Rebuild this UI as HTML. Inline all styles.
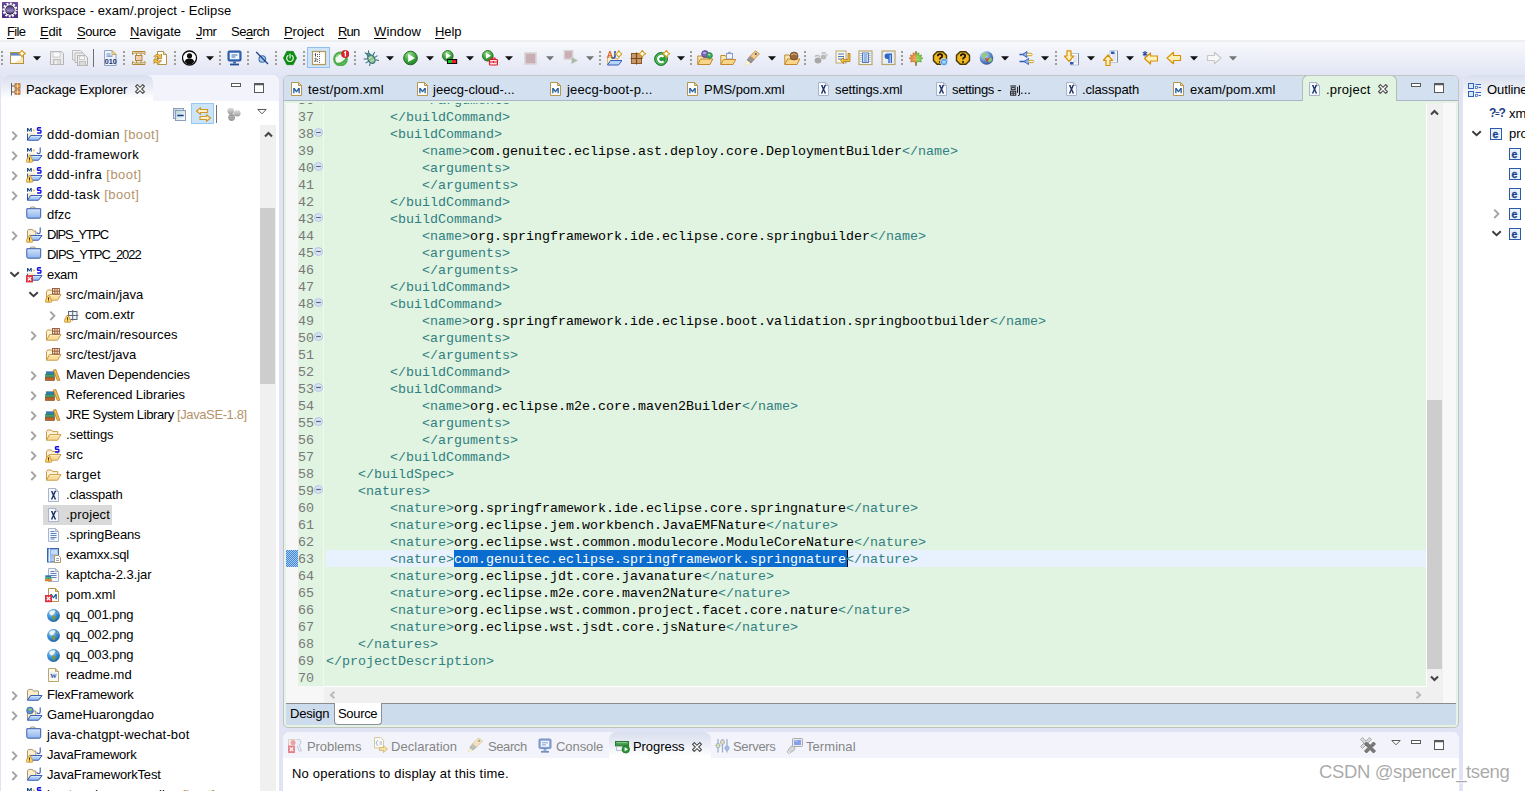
<!DOCTYPE html>
<html><head><meta charset="utf-8"><title>workspace - exam/.project - Eclipse</title>
<style>
html,body{margin:0;padding:0}
body{width:1525px;height:791px;position:relative;overflow:hidden;background:#dfe3f4;font-family:"Liberation Sans", sans-serif;font-size:13px;color:#000}
div,span,svg{position:absolute;box-sizing:border-box}
.t{white-space:pre;line-height:16px;height:16px}
.code{font-family:"Liberation Mono", monospace;font-size:13.333px;white-space:pre;line-height:17px;height:17px;color:#000}
.tg{color:#2f8080;position:static}
.ln{font-family:"Liberation Mono", monospace;font-size:13.333px;line-height:17px;height:17px;color:#787878;left:12px;width:16px}
.dec{color:#b3946a;position:static}
u{text-decoration:underline;text-underline-offset:2px}
</style></head>
<body>
<div style="left:0;top:0;width:1525px;height:22px;background:#fff"></div>
<svg style="left:2px;top:2px" width="16" height="16" viewBox="0 0 16 16" ><defs><linearGradient id="eb" x1="0" y1="0" x2="0" y2="1"><stop offset="0" stop-color="#6b4a9c"/><stop offset="1" stop-color="#4a2a7c"/></linearGradient><linearGradient id="es" x1="0" y1="0" x2="0" y2="1"><stop offset="0" stop-color="#4a3a78"/><stop offset=".5" stop-color="#8a7ab8"/><stop offset="1" stop-color="#3a2868"/></linearGradient></defs><rect x="0" y="0" width="16" height="16" rx=".6" fill="url(#eb)"/><circle cx="8" cy="8" r="6.500" fill="none" stroke="#fff" stroke-width="2" stroke-dasharray="1.900 1.503" stroke-dashoffset=".9"/><circle cx="8" cy="8" r="5.800" fill="#fff"/><circle cx="8" cy="8" r="4.700" fill="#15131f"/><circle cx="8" cy="8" r="3.900" fill="url(#es)"/><path d="M4.300 8.300h7.400M4.600 9.900h6.800" stroke="#b4a8d8" stroke-width=".7" opacity=".8"/></svg>
<div class="t" style="left:23px;top:3px;letter-spacing:0.089px">workspace - exam/.project - Eclipse</div>
<div style="left:0;top:22px;width:1525px;height:20px;background:#fff"></div>
<div style="left:0;top:40px;width:1525px;height:2px;background:#efefef"></div>
<div class="t" style="left:7px;top:24px;letter-spacing:-0.662px"><u>F</u>ile</div>
<div class="t" style="left:40px;top:24px;letter-spacing:-0.200px"><u>E</u>dit</div>
<div class="t" style="left:77px;top:24px;letter-spacing:-0.398px"><u>S</u>ource</div>
<div class="t" style="left:130px;top:24px;letter-spacing:-0.038px"><u>N</u>avigate</div>
<div class="t" style="left:196px;top:24px;letter-spacing:-0.386px"><u>J</u>mr</div>
<div class="t" style="left:231px;top:24px;letter-spacing:-0.498px">Se<u>a</u>rch</div>
<div class="t" style="left:284px;top:24px;letter-spacing:-0.065px"><u>P</u>roject</div>
<div class="t" style="left:338px;top:24px;letter-spacing:-0.816px"><u>R</u>un</div>
<div class="t" style="left:374px;top:24px;letter-spacing:0.127px"><u>W</u>indow</div>
<div class="t" style="left:435px;top:24px;letter-spacing:-0.084px"><u>H</u>elp</div>
<div style="left:0;top:42px;width:1525px;height:34px;background:linear-gradient(#f8f9fc,#eceef8 50%,#e1e5f4)"></div>
<div style="left:1px;top:51px;width:2px;height:14px;background-image:repeating-linear-gradient(#a29d90 0 2px,transparent 2px 4px)"></div>
<svg style="left:10px;top:50px" width="16" height="16" viewBox="0 0 16 16" ><rect x=".5" y="2.5" width="13" height="11" fill="#fff" stroke="#b39243"/><rect x="1" y="3" width="12" height="2.6" fill="#5d86c8"/><path d="M4 13l9-6v6Z" fill="#f6e7bd"/><path d="M12 0.10000000000000009Q12.9 2.6 15.4 3.5Q12.9 4.4 12 6.9Q11.1 4.4 8.6 3.5Q11.1 2.6 12 0.10000000000000009Z" fill="#fff6cc" stroke="#d69a1e" stroke-width="1.1"/><path d="M12 1.9v3.2M10.4 3.5h3.2" stroke="#fffef2" stroke-width="1.2"/></svg>
<svg style="left:33px;top:56px" width="8" height="5" viewBox="0 0 8 5" ><path d="M0 .3h8L4 4.5Z" fill="#111"/></svg>
<svg style="left:49px;top:50px" width="16" height="16" viewBox="0 0 16 16" ><path d="M1.5 1.5h11l2 2v11h-13Z" fill="#ececec" stroke="#b4b4b4"/><rect x="4" y="2" width="7" height="5" fill="#fafafa" stroke="#c2c2c2" stroke-width=".8"/><rect x="4.5" y="9.5" width="7" height="5" fill="#dcdcdc" stroke="#b9b9b9" stroke-width=".8"/><rect x="6" y="11" width="1.6" height="3" fill="#f4f4f4"/></svg>
<svg style="left:72px;top:50px" width="16" height="16" viewBox="0 0 16 16" ><path d="M.5 .5h8l1.5 1.5v8H.5Z" fill="#efefef" stroke="#bdbdbd"/><path d="M3 3h8l1.5 1.5v8H3Z" fill="#efefef" stroke="#b9b9b9"/><path d="M5.5 5.500h8l2 2v8h-10Z" fill="#ececec" stroke="#b0b0b0"/><rect x="7.500" y="6" width="5" height="3.500" fill="#fafafa" stroke="#c4c4c4" stroke-width=".8"/><rect x="7.500" y="11.5" width="6" height="4" fill="#dadada" stroke="#b9b9b9" stroke-width=".8"/></svg>
<div style="left:93px;top:49px;width:1px;height:18px;background:#6e6e6e"></div>
<svg style="left:103px;top:50px" width="16" height="16" viewBox="0 0 16 16" ><path d="M1.5 .5h7.500l4 4v11h-11.500Z" fill="#eef3fb" stroke="#8fa2c8"/><path d="M9 .5v4h4Z" fill="#f6e3b0" stroke="#c9a85a" stroke-linejoin="round"/><path d="M3.500 4h4M3.500 6.200h6" stroke="#6a8ed0" stroke-width="1.200"/><text x="1.800" y="14.200" font-family="Liberation Sans, sans-serif" font-weight="bold" font-size="7.600" fill="#14306e" textLength="12" lengthAdjust="spacingAndGlyphs">010</text></svg>
<div style="left:123px;top:51px;width:2px;height:14px;background-image:repeating-linear-gradient(#a29d90 0 2px,transparent 2px 4px)"></div>
<svg style="left:131px;top:50px" width="16" height="16" viewBox="0 0 16 16" ><path d="M1.500 1.500h12.500v3l-2-1.500H3.500l-2 1.500Z" fill="#fdf6e0" stroke="#b08a3a" stroke-width="1" stroke-linejoin="round"/><path d="M1.500 14.500h12.500v-3l-2 1.500H3.500l-2-1.500Z" fill="#fdf6e0" stroke="#b08a3a" stroke-width="1" stroke-linejoin="round"/><rect x="4.500" y="5.500" width="6.500" height="5" fill="#efd0b4" stroke="#b08a3a"/><path d="M5.500 3v2.500M10 3v2.500M5.500 10.500V13M10 10.500V13" stroke="#b08a3a" stroke-width=".9"/></svg>
<svg style="left:153px;top:50px" width="16" height="16" viewBox="0 0 16 16" ><path d="M4.500 1.500h6l3 3v10h-9Z" fill="#fff" stroke="#b39243"/><path d="M10.5 1.500v3h3" fill="#f6e7bd" stroke="#b39243"/><path d="M1 6.500q3-4 6-1l1.500-1.500v4.500H4l1.500-1.500q-2-1.500-3.500 .5Z" fill="#f6c443" stroke="#a9761a" stroke-width=".7"/><path d="M8.500 11q-3 4-6 1L1 13.500V9h4.500L4 10.500q2 1.500 3.500-.5Z" fill="#f6c443" stroke="#a9761a" stroke-width=".7"/></svg>
<div style="left:174px;top:51px;width:2px;height:14px;background-image:repeating-linear-gradient(#a29d90 0 2px,transparent 2px 4px)"></div>
<svg style="left:182px;top:50px" width="16" height="16" viewBox="0 0 16 16" ><circle cx="7.500" cy="8" r="7" fill="#fff" stroke="#0c0c0c" stroke-width="1.300"/><circle cx="7.500" cy="5.800" r="2.600" fill="#0c0c0c"/><path d="M2.600 11.800q.8-3.400 4.900-3.400t4.900 3.400q-2 2.700-4.900 2.700t-4.900-2.700Z" fill="#0c0c0c"/></svg>
<svg style="left:206px;top:56px" width="8" height="5" viewBox="0 0 8 5" ><path d="M0 .3h8L4 4.5Z" fill="#111"/></svg>
<div style="left:219px;top:51px;width:2px;height:14px;background-image:repeating-linear-gradient(#a29d90 0 2px,transparent 2px 4px)"></div>
<svg style="left:227px;top:50px" width="16" height="16" viewBox="0 0 16 16" ><rect x="1" y="1" width="13" height="10" rx="1.200" fill="#3d6dc0" stroke="#274e96"/><rect x="2.800" y="2.800" width="9.400" height="6.400" fill="#f4f8ff"/><path d="M4.500 5h6M4.500 7h4" stroke="#3d6dc0" stroke-width="1"/><path d="M6 11.500h3v2H6Z" fill="#3d6dc0"/><path d="M3 14.500h9" stroke="#274e96" stroke-width="1.800"/></svg>
<div style="left:247px;top:51px;width:2px;height:14px;background-image:repeating-linear-gradient(#a29d90 0 2px,transparent 2px 4px)"></div>
<svg style="left:254px;top:50px" width="16" height="16" viewBox="0 0 16 16" ><circle cx="8.300" cy="9" r="3.300" fill="#a9cbe8" stroke="#3a72b0" stroke-width="1.100"/><path d="M2.200 2 14 14" stroke="#1f3a8a" stroke-width="1.200"/></svg>
<div style="left:275px;top:51px;width:2px;height:14px;background-image:repeating-linear-gradient(#a29d90 0 2px,transparent 2px 4px)"></div>
<svg style="left:282px;top:50px" width="16" height="16" viewBox="0 0 16 16" ><path d="M4.800 1.300h6.400l3.400 6.700-3.400 6.700H4.800L1.400 8Z" fill="#0e8c12" stroke="#0a7a0e" stroke-width=".6"/><path d="M6 5.600a3.300 3.300 0 1 0 4 0" fill="none" stroke="#e8f8e8" stroke-width="1.200" stroke-linecap="round"/><path d="M8 4v4" stroke="#e8f8e8" stroke-width="1.200" stroke-linecap="round"/></svg>
<div style="left:303px;top:51px;width:2px;height:14px;background-image:repeating-linear-gradient(#a29d90 0 2px,transparent 2px 4px)"></div>
<div style="left:307px;top:47px;width:23px;height:21px;background:#cfe4f8;border:1px solid #90c0ec"></div>
<svg style="left:311px;top:50px" width="16" height="16" viewBox="0 0 16 16" ><rect x="1.500" y="1.500" width="13" height="13" fill="#fff" stroke="#b39a5a" stroke-width="1.200"/><path d="M8.500 2v12" stroke="#555" stroke-width=".9" stroke-dasharray="1 1"/><path d="M4.500 3.500v3M3.800 4.100l.7-.6" stroke="#333" stroke-width=".9" fill="none"/><path d="M3.600 8.600q1.300-1 1.500 .2t-1.600 2.300h2" stroke="#333" stroke-width=".9" fill="none"/><path d="M6.600 4.500v.01M6.600 6.500v.01M6.600 9.500v.01M6.600 11.300v.01" stroke="#333" stroke-width="1.100" stroke-linecap="round"/></svg>
<svg style="left:333px;top:50px" width="16" height="16" viewBox="0 0 16 16" ><circle cx="7.500" cy="9" r="6.300" fill="#f2fbf0" stroke="#4aae4a" stroke-width="2.200"/><path d="M2.500 12.500q6 1.500 10.500-5q.5 5-4 6.500t-6.500-1.500Z" fill="#4aae4a"/><path d="M3.500 7q2-3.500 6-3" stroke="#8fd48a" stroke-width="1.200" fill="none"/><circle cx="12.200" cy="4" r="3.800" fill="#e8202a" stroke="#b01018" stroke-width=".5"/><path d="M11.200 3l1.200-1v4.400" stroke="#fff" stroke-width="1.300" fill="none"/></svg>
<div style="left:354px;top:51px;width:2px;height:14px;background-image:repeating-linear-gradient(#a29d90 0 2px,transparent 2px 4px)"></div>
<svg style="left:363px;top:50px" width="16" height="16" viewBox="0 0 16 16" ><g transform="rotate(-32 8 8.500)"><ellipse cx="8" cy="9.200" rx="3.300" ry="4.600" fill="#8fbf8f" stroke="#2a6a78" stroke-width="1.100"/><circle cx="8" cy="3.800" r="1.700" fill="#5a9a9a" stroke="#2a6a78" stroke-width=".8"/><path d="M4.800 7 1.500 5M4.700 9.500H1M4.800 12 2 14.800M11.200 7l3.300-2M11.300 9.500H15M11.200 12l2.800 2.800M7 2.200 5.800 .3M9 2.200 10.200 .3" stroke="#2a6a78" stroke-width="1"/><path d="M6.300 8q1.700-1.500 3.400 0M6 10.500q2 1.500 4 0" stroke="#d4ecd0" stroke-width=".9" fill="none"/></g></svg>
<svg style="left:386px;top:56px" width="8" height="5" viewBox="0 0 8 5" ><path d="M0 .3h8L4 4.5Z" fill="#111"/></svg>
<svg style="left:403px;top:50px" width="16" height="16" viewBox="0 0 16 16" ><defs><radialGradient id="rg" cx=".4" cy=".25" r=".9"><stop offset="0" stop-color="#9be08f"/><stop offset=".55" stop-color="#3ba03a"/><stop offset="1" stop-color="#1c6e22"/></radialGradient></defs><circle cx="7.5" cy="8" r="6.8" fill="url(#rg)" stroke="#1f6a24" stroke-width="1"/><path d="M5.200 4 12 8 5.200 12Z" fill="#fff"/></svg>
<svg style="left:426px;top:56px" width="8" height="5" viewBox="0 0 8 5" ><path d="M0 .3h8L4 4.5Z" fill="#111"/></svg>
<svg style="left:442px;top:50px" width="16" height="16" viewBox="0 0 16 16" ><defs><radialGradient id="rg" cx=".4" cy=".25" r=".9"><stop offset="0" stop-color="#9be08f"/><stop offset=".55" stop-color="#3ba03a"/><stop offset="1" stop-color="#1c6e22"/></radialGradient></defs><circle cx="5.800" cy="5.800" r="5.300" fill="url(#rg)" stroke="#1f6a24" stroke-width=".9"/><path d="M4 2.800 9 5.800 4 8.800Z" fill="#fff"/><rect x="5" y="9" width="10.200" height="5" fill="#0a0a0a"/><rect x="6" y="10" width="4" height="3" fill="#14c030"/><rect x="10" y="10" width="4.200" height="3" fill="#e8202a"/></svg>
<svg style="left:466px;top:56px" width="8" height="5" viewBox="0 0 8 5" ><path d="M0 .3h8L4 4.5Z" fill="#111"/></svg>
<svg style="left:482px;top:50px" width="16" height="16" viewBox="0 0 16 16" ><defs><radialGradient id="rg" cx=".4" cy=".25" r=".9"><stop offset="0" stop-color="#9be08f"/><stop offset=".55" stop-color="#3ba03a"/><stop offset="1" stop-color="#1c6e22"/></radialGradient></defs><circle cx="5.800" cy="5.800" r="5.300" fill="url(#rg)" stroke="#1f6a24" stroke-width=".9"/><path d="M4 2.800 9 5.800 4 8.800Z" fill="#fff"/><rect x="7.500" y="9.500" width="8" height="5.500" rx=".8" fill="#fbe4e4" stroke="#d8202a" stroke-width="1.200"/><path d="M10 9.500V8h3v1.500" stroke="#d8202a" fill="none" stroke-width="1.200"/><path d="M7.500 12h8M11.500 11v2" stroke="#d8202a" stroke-width="1.200"/></svg>
<svg style="left:505px;top:56px" width="8" height="5" viewBox="0 0 8 5" ><path d="M0 .3h8L4 4.5Z" fill="#111"/></svg>
<svg style="left:523px;top:50px" width="16" height="16" viewBox="0 0 16 16" ><rect x="2" y="3" width="11" height="11" fill="#c9afb5" stroke="#dad3d4" stroke-width="1.600"/></svg>
<svg style="left:546px;top:56px" width="8" height="5" viewBox="0 0 8 5" ><path d="M0 .3h8L4 4.5Z" fill="#747474"/></svg>
<svg style="left:563px;top:50px" width="16" height="16" viewBox="0 0 16 16" ><rect x="1.200" y=".5" width="8.600" height="8.600" fill="#c9afb5" stroke="#dad3d4" stroke-width="1.400"/><path d="M8.500 7 14.800 10.500 8.500 14Z" fill="#aab8aa" stroke="#cfd8cf" stroke-width=".8"/></svg>
<svg style="left:586px;top:56px" width="8" height="5" viewBox="0 0 8 5" ><path d="M0 .3h8L4 4.5Z" fill="#747474"/></svg>
<div style="left:599px;top:51px;width:2px;height:14px;background-image:repeating-linear-gradient(#a29d90 0 2px,transparent 2px 4px)"></div>
<svg style="left:606px;top:50px" width="16" height="16" viewBox="0 0 16 16" ><path d="M1.500 14.500V8.500l1-1.500h3l1 1.500h5v1.500" fill="#fbeec8" stroke="#c9a85a" stroke-width=".8"/><path d="M1.500 15 4.500 10.500h11.500l-3.500 4.500Z" fill="#b4d4f8" stroke="#3a5ab8"/><path d="M.8 8 3.300 1h1.200L7 8H5.500L5 6.300H2.800L2.300 8ZM3.100 5.200h1.600L3.900 2.600Z" fill="#e0601a"/><path d="M9 1v5q0 2-1.800 2-1 0-1.500-.6" fill="none" stroke="#1f5aa8" stroke-width="1.600"/><path d="M12.8 0.6000000000000001Q13.700000000000001 3.1 16.2 4Q13.700000000000001 4.9 12.8 7.4Q11.9 4.9 9.4 4Q11.9 3.1 12.8 0.6000000000000001Z" fill="#fff6cc" stroke="#d69a1e" stroke-width="1.1"/><path d="M12.8 2.4v3.2M11.200000000000001 4h3.2" stroke="#fffef2" stroke-width="1.2"/></svg>
<svg style="left:630px;top:50px" width="16" height="16" viewBox="0 0 16 16" ><rect x="1.500" y="3.500" width="10" height="10" fill="#c79a68" stroke="#8a5a2c"/><path d="M6.500 2.500v12M.5 8.500h12" stroke="#7a4a1e" stroke-width="1.200"/><path d="M12.3 0.30000000000000027Q13.200000000000001 2.8000000000000003 15.700000000000001 3.7Q13.200000000000001 4.6000000000000005 12.3 7.1Q11.4 4.6000000000000005 8.9 3.7Q11.4 2.8000000000000003 12.3 0.30000000000000027Z" fill="#fff6cc" stroke="#d69a1e" stroke-width="1.1"/><path d="M12.3 2.1v3.2M10.700000000000001 3.7h3.2" stroke="#fffef2" stroke-width="1.2"/></svg>
<svg style="left:654px;top:50px" width="16" height="16" viewBox="0 0 16 16" ><circle cx="7" cy="9" r="6.400" fill="#2a9a3a" stroke="#157024" stroke-width="1"/><circle cx="7" cy="9" r="5.200" fill="none" stroke="#6acc6a" stroke-width=".8"/><path d="M9.600 6.800q-2.400-1.800-4.500 0t0 4.600q2.200 1.700 4.500 0" stroke="#fff" stroke-width="2" fill="none"/><path d="M12.3 0.30000000000000027Q13.200000000000001 2.8000000000000003 15.700000000000001 3.7Q13.200000000000001 4.6000000000000005 12.3 7.1Q11.4 4.6000000000000005 8.9 3.7Q11.4 2.8000000000000003 12.3 0.30000000000000027Z" fill="#fff6cc" stroke="#d69a1e" stroke-width="1.1"/><path d="M12.3 2.1v3.2M10.700000000000001 3.7h3.2" stroke="#fffef2" stroke-width="1.2"/></svg>
<svg style="left:677px;top:56px" width="8" height="5" viewBox="0 0 8 5" ><path d="M0 .3h8L4 4.5Z" fill="#111"/></svg>
<div style="left:690px;top:51px;width:2px;height:14px;background-image:repeating-linear-gradient(#a29d90 0 2px,transparent 2px 4px)"></div>
<svg style="left:697px;top:50px" width="16" height="16" viewBox="0 0 16 16" ><path d="M.8 14.500V6h4.500l1 1.500h6V9" fill="#fbe6b4" stroke="#c08a2c"/><path d="M.8 14.500 3.500 9h12.300L13 14.500Z" fill="#f9d58c" stroke="#c08a2c"/><circle cx="8" cy="4" r="3.400" fill="#7a68c0" stroke="#4a3a90" stroke-width=".7"/><circle cx="12.500" cy="5.500" r="2.900" fill="#3fa860" stroke="#1f7a40" stroke-width=".7"/><ellipse cx="7.500" cy="3" rx="1.800" ry="1" fill="#b9aee6"/><ellipse cx="12.200" cy="4.700" rx="1.500" ry=".8" fill="#a6e0b8"/></svg>
<svg style="left:720px;top:50px" width="16" height="16" viewBox="0 0 16 16" ><path d="M.8 14.500V5.500h4.500l1 1.500h6V9" fill="#fbe6b4" stroke="#c08a2c"/><rect x="6.500" y="3.500" width="6" height="5.500" fill="#f0f4fc" stroke="#8a9ec8"/><path d="M8.300 3.500V2.300h2.400v1.200" stroke="#8a9ec8" fill="none"/><path d="M.8 14.500 3.500 9.500h12.300L13 14.500Z" fill="#f9d58c" stroke="#c08a2c"/></svg>
<svg style="left:744px;top:50px" width="16" height="16" viewBox="0 0 16 16" ><path d="M.8 15.500l2.400-5.500 3.800 3Z" fill="#fffbe0" stroke="#f0e0a0" stroke-width=".6"/><path d="M3.200 10 6 6.200l4.200 3.100L7 13Z" fill="#9a9496" stroke="#6a6466" stroke-width=".6"/><path d="M6 6.200 11.500 .8l4 3L10.200 9.300Z" fill="#f3c98a" stroke="#c08a3a" stroke-width=".8"/><circle cx="11.800" cy="4" r="1" fill="#2a5a9a"/></svg>
<svg style="left:768px;top:56px" width="8" height="5" viewBox="0 0 8 5" ><path d="M0 .3h8L4 4.5Z" fill="#111"/></svg>
<svg style="left:784px;top:50px" width="16" height="16" viewBox="0 0 16 16" ><path d="M.8 14.500V5h4.500l1 1.500h6V9" fill="#fbe6b4" stroke="#c08a2c"/><path d="M.8 14.500 3.500 9h12.300L13 14.500Z" fill="#f9d58c" stroke="#c08a2c"/><circle cx="10" cy="6" r="4" fill="#9a6a3c" stroke="#6a4420" stroke-width=".7"/><path d="M7 5q3-2.500 6 0" stroke="#d8b48a" stroke-width="1" fill="none"/></svg>
<div style="left:804px;top:51px;width:2px;height:14px;background-image:repeating-linear-gradient(#a29d90 0 2px,transparent 2px 4px)"></div>
<svg style="left:813px;top:50px" width="16" height="16" viewBox="0 0 16 16" ><ellipse cx="5" cy="10.500" rx="3.400" ry="3" fill="#a8a8a8"/><ellipse cx="10.500" cy="7" rx="2.800" ry="2.500" fill="#b9b9b9"/><path d="M2 6.500q2-2 5 0M8.500 3.500q2-1.500 4.500 0" stroke="#bdbdbd" stroke-width="1.400" fill="none"/><circle cx="13.800" cy="5" r="1" fill="#c4c4c4"/></svg>
<svg style="left:835px;top:50px" width="16" height="16" viewBox="0 0 16 16" ><rect x="1" y="1" width="10" height="12" fill="#fbf8ec" stroke="#b9a66a"/><path d="M3 4h6M3 6.500h6M3 9h4" stroke="#4a78c0" stroke-width="1.200"/><path d="M13 3.500v6H8.500V7.500L5.500 10.500l3 3V11.500H15V3.500Z" fill="#f6c443" stroke="#a9761a" stroke-width=".8"/></svg>
<svg style="left:858px;top:50px" width="16" height="16" viewBox="0 0 16 16" ><rect x="1" y="1" width="13" height="13.500" fill="#fbfaf2" stroke="#b9a66a" stroke-width="1.200"/><rect x="4.500" y="3" width="6" height="9.500" fill="#fff" stroke="#3a6cc4" stroke-width=".9"/><path d="M5.500 5h4M5.500 7h4M5.500 9h4M5.500 11h4" stroke="#3a6cc4" stroke-width="1"/><path d="M3 3v9.500M12 3v9.500" stroke="#6a8ed0" stroke-width="1" stroke-dasharray="1 1"/></svg>
<svg style="left:881px;top:50px" width="16" height="16" viewBox="0 0 16 16" ><rect x="1" y="1" width="13" height="13.500" fill="#e6eefa" stroke="#b9a66a" stroke-width="1.200"/><path d="M11 3.500H6.300a2.700 2.700 0 0 0 0 5.400H7.300v4h1.400V5h.9v7.900H11Z" fill="#2f66c4"/></svg>
<div style="left:901px;top:51px;width:2px;height:14px;background-image:repeating-linear-gradient(#a29d90 0 2px,transparent 2px 4px)"></div>
<svg style="left:908px;top:50px" width="16" height="16" viewBox="0 0 16 16" ><path d="M8 1.200 9.200 3.800 11 2.800 10.800 6 13.600 4.800 12.800 7.400 15 8.200 12.600 9.800 13.400 12 10 11.400 9.200 12.400 8.400 12.200 8.600 15.500H7.800Z" fill="#86cc44" stroke="#4c9c28" stroke-width=".6" stroke-linejoin="round"/><path d="M8 1.200 6.800 3.800 5 2.800 5.200 6 2.400 4.800 3.200 7.400 1 8.200 3.400 9.800 2.600 12 6 11.400 6.800 12.400 7.600 12.200 7.800 15.500H8Z" fill="#e8903c" stroke="#b8641c" stroke-width=".6" stroke-linejoin="round"/><path d="M8 4.500v7.500M8 8 5.200 6.200M8 9.500 4.800 9.800M8 8l2.800-1.800M8 9.500l3.200 .3" stroke="#f6f0d8" stroke-width=".5" opacity=".8"/></svg>
<svg style="left:932px;top:50px" width="16" height="16" viewBox="0 0 16 16" ><path d="M5.2 1.700h5.600l3.700 3.700v5.200l-3.700 3.700H5.200l-3.700-3.700V5.400Z" fill="#f0b820" stroke="#4a3808" stroke-width="1.4"/><path d="M5.800 6.200q0-2 2.200-2t2.200 1.800q0 1.200-1.200 1.800t-1 1.700" fill="none" stroke="#1a1206" stroke-width="1.700"/><path d="M8 11v1.700" stroke="#1a1206" stroke-width="1.700"/><circle cx="12" cy="12" r="3.500" fill="#2a8ae8" stroke="#e8f2ff" stroke-width=".8"/><path d="M10.200 11.200h3.600M10.200 12.900h3.600" stroke="#fff" stroke-width="1"/></svg>
<svg style="left:955px;top:50px" width="16" height="16" viewBox="0 0 16 16" ><path d="M5.2 1.700h5.600l3.700 3.700v5.200l-3.700 3.700H5.200l-3.700-3.700V5.400Z" fill="#f0b820" stroke="#4a3808" stroke-width="1.4"/><path d="M5.800 6.200q0-2 2.200-2t2.200 1.800q0 1.200-1.200 1.800t-1 1.700" fill="none" stroke="#1a1206" stroke-width="1.700"/><path d="M8 11v1.700" stroke="#1a1206" stroke-width="1.700"/></svg>
<svg style="left:979px;top:50px" width="16" height="16" viewBox="0 0 16 16" ><defs><radialGradient id="tg" cx=".35" cy=".3" r=".8"><stop offset="0" stop-color="#e6f2ff"/><stop offset=".45" stop-color="#6a9ad8"/><stop offset="1" stop-color="#26478a"/></radialGradient></defs><circle cx="7.500" cy="8" r="6.800" fill="url(#tg)"/><path d="M3 5q2-3 5-2q1.500 2-.5 3t-2 3.500q-2.500-1-2.500-4.500ZM9 8.500q3-1.500 4.500 .5-1 3.500-3.500 3.500-2-2-1-4Z" fill="#8fc46a" opacity=".9"/><path d="M6.500 8l1.500 3 1.500-3" stroke="#d8401e" stroke-width="1.200" fill="none"/></svg>
<svg style="left:1001px;top:56px" width="8" height="5" viewBox="0 0 8 5" ><path d="M0 .3h8L4 4.5Z" fill="#111"/></svg>
<svg style="left:1019px;top:50px" width="16" height="16" viewBox="0 0 16 16" ><path d="M.5 4.500h5M.5 11.500h6" stroke="#2f5ab8" stroke-width="1.400"/><path d="M3.500 4.500 8 1.500v6ZM5 11.500 9.500 8.500v6Z" fill="#8fb4ec" stroke="#2f5ab8" stroke-width=".9" stroke-linejoin="round"/><path d="M8 3.300h4.500q1.500 1.200 0 2.400H8M9.500 10.300H14q1.500 1.200 0 2.400H9.500" fill="#fff6d8" stroke="#d0a030" stroke-width="1"/></svg>
<svg style="left:1041px;top:56px" width="8" height="5" viewBox="0 0 8 5" ><path d="M0 .3h8L4 4.5Z" fill="#111"/></svg>
<div style="left:1055px;top:51px;width:2px;height:14px;background-image:repeating-linear-gradient(#a29d90 0 2px,transparent 2px 4px)"></div>
<svg style="left:1064px;top:50px" width="16" height="16" viewBox="0 0 16 16" ><rect x="7" y="3.500" width="7.500" height="11.500" fill="#fff" stroke="#aab6cc" stroke-width=".8"/><path d="M9 6h4.500M9 8h4.500M9 10h4.500M9 12h4.500" stroke="#c4cee0"/><path d="M14.500 3.500v11.500" stroke="#7a8eb0"/><rect x="6" y="12" width="3.500" height="2.500" fill="#2f5ab8"/><path d="M3 .8h4V6h2.600L5 11.300 .4 6H3Z" fill="#fff2b8" stroke="#d8900a" stroke-width="1.200" stroke-linejoin="round"/></svg>
<svg style="left:1087px;top:56px" width="8" height="5" viewBox="0 0 8 5" ><path d="M0 .3h8L4 4.5Z" fill="#111"/></svg>
<svg style="left:1103px;top:50px" width="16" height="16" viewBox="0 0 16 16" ><rect x="7" y=".8" width="7.500" height="11.500" fill="#fff" stroke="#aab6cc" stroke-width=".8"/><path d="M9 4h4.500M9 6h4.500M9 8h4.500M9 10h4.500" stroke="#c4cee0"/><path d="M14.500 .8v11.500" stroke="#7a8eb0"/><rect x="8" y="1.500" width="3.500" height="2.500" fill="#2f5ab8"/><path d="M3 15.500h4v-5.200h2.600L5 5 .4 10.300H3Z" fill="#fff2b8" stroke="#d8900a" stroke-width="1.200" stroke-linejoin="round"/></svg>
<svg style="left:1126px;top:56px" width="8" height="5" viewBox="0 0 8 5" ><path d="M0 .3h8L4 4.5Z" fill="#111"/></svg>
<svg style="left:1142px;top:50px" width="16" height="16" viewBox="0 0 16 16" ><path d="M8.500 3 2.500 8.500l6 5.500V11H15.500V6H8.500Z" fill="#fff2b8" stroke="#d8900a" stroke-width="1.200" stroke-linejoin="round"/><path d="M3 1v5.500M.8 2.300l4.400 2.900M5.200 2.300.8 5.200" stroke="#2a4a9a" stroke-width="1.100"/></svg>
<svg style="left:1166px;top:50px" width="16" height="16" viewBox="0 0 16 16" ><path d="M7.500 2.300 1 8l6.500 5.700V10.500H14.500V5.500H7.500Z" fill="#fff2b8" stroke="#d8900a" stroke-width="1.200" stroke-linejoin="round"/></svg>
<svg style="left:1190px;top:56px" width="8" height="5" viewBox="0 0 8 5" ><path d="M0 .3h8L4 4.5Z" fill="#111"/></svg>
<svg style="left:1206px;top:50px" width="16" height="16" viewBox="0 0 16 16" ><path d="M8.500 2.300 15 8l-6.500 5.700V10.500H1.500V5.500H8.500Z" fill="#f8f8f8" stroke="#c8c8c8" stroke-width="1.200" stroke-linejoin="round"/></svg>
<svg style="left:1229px;top:56px" width="8" height="5" viewBox="0 0 8 5" ><path d="M0 .3h8L4 4.5Z" fill="#747474"/></svg>
<div style="left:1px;top:75px;width:278px;height:720px;background:#fff;border-radius:7px 7px 0 0;overflow:hidden">
<div style="left:0;top:0;width:278px;height:26px;background:#f3f4fb"></div>
<div style="left:0;top:0;width:152px;height:26px;background:linear-gradient(#d9dfee,#ebeef6 50%,#fff 92%);border-radius:7px 7px 0 0"></div>
<svg style="left:9px;top:8px" width="11" height="13" viewBox="0 0 11 13" ><path d="M1.500 0v12.500M1.500 3h3.500M1.500 9h3.500" stroke="#5f5f5f" fill="none"/><rect x="5" y=".8" width="5" height="4.400" fill="#d68a3c" stroke="#a85a1c" stroke-width=".8"/><rect x="5" y="6.800" width="5" height="4.400" fill="#d68a3c" stroke="#a85a1c" stroke-width=".8"/><path d="M7.500 .8v4.400M5 3h5M7.500 6.800v4.400M5 9h5" stroke="#f6dcb8" stroke-width=".8"/></svg>
<div class="t" style="left:25px;top:7px;letter-spacing:-0.082px">Package Explorer</div>
<svg style="left:134px;top:9px" width="10" height="10" viewBox="0 0 10 10" ><path d="M.6 2.300 2.300 .6 5 3.300 7.700 .6 9.400 2.300 6.700 5 9.400 7.700 7.700 9.400 5 6.700 2.300 9.400 .6 7.700 3.300 5Z" fill="#fff" stroke="#4a4a4a" stroke-width="1.1" stroke-linejoin="miter"/></svg>
<svg style="left:230px;top:8px" width="10" height="4" viewBox="0 0 10 4" ><rect x=".5" y=".5" width="9" height="3" fill="#fff" stroke="#5a5a5a"/></svg>
<svg style="left:253px;top:8px" width="10" height="10" viewBox="0 0 10 10" ><rect x=".5" y=".5" width="9" height="9" fill="#fff" stroke="#5a5a5a"/><path d="M.5 1.5h9" stroke="#5a5a5a" stroke-width="1.4"/></svg>
<svg style="left:172px;top:33px" width="14" height="14" viewBox="0 0 14 14" ><defs><linearGradient id="cg" x1="0" y1="0" x2="1" y2="1"><stop offset="0" stop-color="#b4d4d6"/><stop offset="1" stop-color="#ffffff"/></linearGradient></defs><rect x=".5" y=".5" width="10" height="10" fill="url(#cg)" stroke="#8e9cc0"/><rect x="2.500" y="2.500" width="10" height="10" fill="url(#cg)" stroke="#8e9cc0"/><path d="M4.300 7.500h6.400" stroke="#123f8c" stroke-width="1.600"/></svg>
<div style="left:190px;top:28px;width:23px;height:21px;background:#cce4f7;border:1px solid #99c9ef"></div>
<svg style="left:194.5px;top:32px" width="16" height="15" viewBox="0 0 16 15" ><path d="M4.500 .6 .6 4 4.500 7.400V5.500H11.500V2.500H4.500Z" fill="#fff3cc" stroke="#d1962a" stroke-width="1.200" stroke-linejoin="round"/><path d="M10.500 7.600 14.400 11 10.500 14.400V12.500H4V9.500H10.500Z" fill="#fff3cc" stroke="#d1962a" stroke-width="1.200" stroke-linejoin="round"/></svg>
<div style="left:215px;top:30px;width:1px;height:18px;background:#707070"></div>
<svg style="left:226px;top:32px" width="14" height="14" viewBox="0 0 14 14" ><defs><linearGradient id="fg" x1="0" y1="0" x2="0" y2="1"><stop offset="0" stop-color="#e4e4e4"/><stop offset="1" stop-color="#9c9c9c"/></linearGradient></defs><circle cx="3.700" cy="4" r="3.300" fill="url(#fg)"/><circle cx="10.300" cy="6.200" r="3.300" fill="url(#fg)"/><circle cx="4.600" cy="10.500" r="3.400" fill="#9a9a9a"/><path d="M1.500 3h4.400M8 5.200h4.600M2.300 9.500h4.600M2 11.200h5.200" stroke="#c8c8c8" stroke-width=".7" opacity=".8"/></svg>
<svg style="left:256px;top:34px" width="10" height="6" viewBox="0 0 10 6" ><path d="M.8 .5h8.400L5 4.800Z" fill="#fff" stroke="#5a5a5a" stroke-width="1"/></svg>
<div style="left:259px;top:50px;width:16px;height:680px;background:#f0f0f0"></div>
<div style="left:259px;top:133px;width:15px;height:176px;background:#cdcdcd"></div>
<svg style="left:263px;top:56px" width="9" height="7" viewBox="0 0 9 7" ><path d="M1 5.400 4.500 1.900 8 5.400" fill="none" stroke="#444" stroke-width="2.100"/></svg>
<svg style="left:10.2px;top:55px" width="7" height="11" viewBox="0 0 7 11" ><path d="M1.3 1.6 5.4 5.8 1.3 10" fill="none" stroke="#a3a3a3" stroke-width="1.9"/></svg>
<svg style="left:25px;top:51px" width="17" height="17" viewBox="0 0 17 17" ><path d="M1.500 14.200V7.600" stroke="#2c50b0" stroke-width="1"/><path d="M2 7h7v2.600H4.500L2 13.500Z" fill="#fbeec8"/><path d="M1.5 14.200 4.500 9.600H16l-3.500 4.600Z" fill="#a6cbf5" stroke="#2c50b0" stroke-width="1" stroke-linejoin="round"/><path d="M5 10.600h9.500" stroke="#d6e8fc" stroke-width="1"/><path d="M1 5.8V2h1.200l1.200 1.900L4.6 2H5.8v3.800H4.7V3.7l-1 1.500h-.6l-1-1.500v2.100Z" fill="#1f4a8a"/><path d="M7 3.5l1.200 .9-1.200 .9M8.3 4.4h.8" stroke="#e0b030" stroke-width=".9" fill="none"/><path d="M15.1 1.7000000000000002H12.299999999999999Q11.5 1.7000000000000002 11.5 2.5V3.5Q11.5 4.300000000000001 12.299999999999999 4.300000000000001H14.1Q14.899999999999999 4.300000000000001 14.899999999999999 5.1V6.2Q14.899999999999999 7.0 14.1 7.0H11.1" fill="none" stroke="#1212e6" stroke-width="1.450"/></svg>
<div class="t" style="left:46px;top:52px;letter-spacing:0.436px">ddd-domian <span class="dec">[boot]</span></div>
<svg style="left:10.2px;top:75px" width="7" height="11" viewBox="0 0 7 11" ><path d="M1.3 1.6 5.4 5.8 1.3 10" fill="none" stroke="#a3a3a3" stroke-width="1.9"/></svg>
<svg style="left:25px;top:71px" width="17" height="17" viewBox="0 0 17 17" ><path d="M1.500 14.200V7.600" stroke="#2c50b0" stroke-width="1"/><path d="M2 7h7v2.600H4.500L2 13.500Z" fill="#fbeec8"/><path d="M1.5 14.200 4.500 9.600H16l-3.500 4.600Z" fill="#a6cbf5" stroke="#2c50b0" stroke-width="1" stroke-linejoin="round"/><path d="M5 10.600h9.500" stroke="#d6e8fc" stroke-width="1"/><path d="M1 5.8V2h1.200l1.200 1.900L4.6 2H5.8v3.800H4.7V3.7l-1 1.500h-.6l-1-1.500v2.100Z" fill="#1f4a8a"/><path d="M7 3.5l1.200 .9-1.200 .9M8.3 4.4h.8" stroke="#e0b030" stroke-width=".9" fill="none"/><path d="M14.2 1.4000000000000004v4.600q0 1.700-1.600 1.700t-1.600-1.400" fill="none" stroke="#3a5aad" stroke-width="1.100"/><path d="M3.5 9.399999999999999Q4.2 9.399999999999999 4.6 10.2L6.8 14.799999999999999Q7.2 16.2 5.8 16.2H1.2Q-0.2 16.2 0.2 14.799999999999999L2.4 10.2Q2.8 9.399999999999999 3.5 9.399999999999999Z" fill="#f9d672" stroke="#c88a24" stroke-width=".8"/><path d="M3.5 11.399999999999999v2.400M3.5 14.5v.8" stroke="#4a3206" stroke-width="1"/></svg>
<div class="t" style="left:46px;top:72px;letter-spacing:0.424px">ddd-framework</div>
<svg style="left:10.2px;top:95px" width="7" height="11" viewBox="0 0 7 11" ><path d="M1.3 1.6 5.4 5.8 1.3 10" fill="none" stroke="#a3a3a3" stroke-width="1.9"/></svg>
<svg style="left:25px;top:91px" width="17" height="17" viewBox="0 0 17 17" ><path d="M1.500 14.200V7.600" stroke="#2c50b0" stroke-width="1"/><path d="M2 7h7v2.600H4.500L2 13.500Z" fill="#fbeec8"/><path d="M1.5 14.200 4.500 9.600H16l-3.500 4.600Z" fill="#a6cbf5" stroke="#2c50b0" stroke-width="1" stroke-linejoin="round"/><path d="M5 10.600h9.500" stroke="#d6e8fc" stroke-width="1"/><path d="M1 5.8V2h1.200l1.200 1.900L4.6 2H5.8v3.800H4.7V3.7l-1 1.500h-.6l-1-1.500v2.100Z" fill="#1f4a8a"/><path d="M7 3.5l1.200 .9-1.200 .9M8.3 4.4h.8" stroke="#e0b030" stroke-width=".9" fill="none"/><path d="M15.1 1.7000000000000002H12.299999999999999Q11.5 1.7000000000000002 11.5 2.5V3.5Q11.5 4.300000000000001 12.299999999999999 4.300000000000001H14.1Q14.899999999999999 4.300000000000001 14.899999999999999 5.1V6.2Q14.899999999999999 7.0 14.1 7.0H11.1" fill="none" stroke="#1212e6" stroke-width="1.450"/><path d="M3.5 9.399999999999999Q4.2 9.399999999999999 4.6 10.2L6.8 14.799999999999999Q7.2 16.2 5.8 16.2H1.2Q-0.2 16.2 0.2 14.799999999999999L2.4 10.2Q2.8 9.399999999999999 3.5 9.399999999999999Z" fill="#f9d672" stroke="#c88a24" stroke-width=".8"/><path d="M3.5 11.399999999999999v2.400M3.5 14.5v.8" stroke="#4a3206" stroke-width="1"/></svg>
<div class="t" style="left:46px;top:92px;letter-spacing:0.441px">ddd-infra <span class="dec">[boot]</span></div>
<svg style="left:10.2px;top:115px" width="7" height="11" viewBox="0 0 7 11" ><path d="M1.3 1.6 5.4 5.8 1.3 10" fill="none" stroke="#a3a3a3" stroke-width="1.9"/></svg>
<svg style="left:25px;top:111px" width="17" height="17" viewBox="0 0 17 17" ><path d="M1.500 14.200V7.600" stroke="#2c50b0" stroke-width="1"/><path d="M2 7h7v2.600H4.500L2 13.500Z" fill="#fbeec8"/><path d="M1.5 14.200 4.500 9.600H16l-3.500 4.600Z" fill="#a6cbf5" stroke="#2c50b0" stroke-width="1" stroke-linejoin="round"/><path d="M5 10.600h9.500" stroke="#d6e8fc" stroke-width="1"/><path d="M1 5.8V2h1.200l1.200 1.900L4.6 2H5.8v3.800H4.7V3.7l-1 1.500h-.6l-1-1.500v2.100Z" fill="#1f4a8a"/><path d="M7 3.5l1.200 .9-1.200 .9M8.3 4.4h.8" stroke="#e0b030" stroke-width=".9" fill="none"/><path d="M15.1 1.7000000000000002H12.299999999999999Q11.5 1.7000000000000002 11.5 2.5V3.5Q11.5 4.300000000000001 12.299999999999999 4.300000000000001H14.1Q14.899999999999999 4.300000000000001 14.899999999999999 5.1V6.2Q14.899999999999999 7.0 14.1 7.0H11.1" fill="none" stroke="#1212e6" stroke-width="1.450"/></svg>
<div class="t" style="left:46px;top:112px;letter-spacing:0.421px">ddd-task <span class="dec">[boot]</span></div>
<svg style="left:25px;top:131px" width="17" height="17" viewBox="0 0 17 17" ><defs><linearGradient id="cf" x1="0" y1="0" x2="0" y2="1"><stop offset="0" stop-color="#d3e4fa"/><stop offset="1" stop-color="#8db4ec"/></linearGradient></defs><path d="M4 2.700 4.800 1h4l.8 1.700" fill="#f8efcf" stroke="#9a968a" stroke-width=".9"/><path d="M.8 2.700h13.900v8q0 1.500-1.500 1.500H2.300q-1.500 0-1.500-1.500Z" fill="url(#cf)" stroke="#3a5aa8" stroke-width="1"/></svg>
<div class="t" style="left:46px;top:132px;letter-spacing:-0.010px">dfzc</div>
<svg style="left:10.2px;top:155px" width="7" height="11" viewBox="0 0 7 11" ><path d="M1.3 1.6 5.4 5.8 1.3 10" fill="none" stroke="#a3a3a3" stroke-width="1.9"/></svg>
<svg style="left:25px;top:151px" width="17" height="17" viewBox="0 0 17 17" ><path d="M1.500 14V5l1.200-1.600h3.600L7.500 5h2.300v4.600" fill="#fbeec8" stroke="#a89878" stroke-width="1" stroke-linejoin="round"/><path d="M1.5 14.200 4.500 9.600H16l-3.500 4.600Z" fill="#a6cbf5" stroke="#2c50b0" stroke-width="1" stroke-linejoin="round"/><path d="M5 10.600h9.500" stroke="#d6e8fc" stroke-width="1"/><path d="M14.2 1.4000000000000004v4.600q0 1.700-1.600 1.700t-1.600-1.400" fill="none" stroke="#3a5aad" stroke-width="1.100"/><path d="M3.5 9.399999999999999Q4.2 9.399999999999999 4.6 10.2L6.8 14.799999999999999Q7.2 16.2 5.8 16.2H1.2Q-0.2 16.2 0.2 14.799999999999999L2.4 10.2Q2.8 9.399999999999999 3.5 9.399999999999999Z" fill="#f9d672" stroke="#c88a24" stroke-width=".8"/><path d="M3.5 11.399999999999999v2.400M3.5 14.5v.8" stroke="#4a3206" stroke-width="1"/></svg>
<div class="t" style="left:46px;top:152px;letter-spacing:-1.260px">DIPS_YTPC</div>
<svg style="left:25px;top:171px" width="17" height="17" viewBox="0 0 17 17" ><defs><linearGradient id="cf" x1="0" y1="0" x2="0" y2="1"><stop offset="0" stop-color="#d3e4fa"/><stop offset="1" stop-color="#8db4ec"/></linearGradient></defs><path d="M4 2.700 4.800 1h4l.8 1.700" fill="#f8efcf" stroke="#9a968a" stroke-width=".9"/><path d="M.8 2.700h13.900v8q0 1.500-1.500 1.500H2.300q-1.500 0-1.500-1.500Z" fill="url(#cf)" stroke="#3a5aa8" stroke-width="1"/></svg>
<div class="t" style="left:46px;top:172px;letter-spacing:-1.056px">DIPS_YTPC_2022</div>
<svg style="left:8px;top:196px" width="11" height="7" viewBox="0 0 11 7" ><path d="M1.4 1.3 5.6 5.3 9.8 1.3" fill="none" stroke="#3c3c3c" stroke-width="1.9"/></svg>
<svg style="left:25px;top:191px" width="17" height="17" viewBox="0 0 17 17" ><path d="M1.500 14.200V7.600" stroke="#2c50b0" stroke-width="1"/><path d="M2 7h7v2.600H4.500L2 13.500Z" fill="#fbeec8"/><path d="M1.5 14.200 4.500 9.600H16l-3.500 4.600Z" fill="#a6cbf5" stroke="#2c50b0" stroke-width="1" stroke-linejoin="round"/><path d="M5 10.600h9.500" stroke="#d6e8fc" stroke-width="1"/><path d="M1 5.8V2h1.200l1.200 1.900L4.6 2H5.8v3.800H4.7V3.7l-1 1.500h-.6l-1-1.500v2.100Z" fill="#1f4a8a"/><path d="M7 3.5l1.200 .9-1.200 .9M8.3 4.4h.8" stroke="#e0b030" stroke-width=".9" fill="none"/><path d="M15.1 1.7000000000000002H12.299999999999999Q11.5 1.7000000000000002 11.5 2.5V3.5Q11.5 4.300000000000001 12.299999999999999 4.300000000000001H14.1Q14.899999999999999 4.300000000000001 14.899999999999999 5.1V6.2Q14.899999999999999 7.0 14.1 7.0H11.1" fill="none" stroke="#1212e6" stroke-width="1.450"/><rect x="0" y="9.2" width="7" height="7.200" fill="#e0323e"/><path d="M1.8 11.1l3.400 3.400M5.2 11.1l-3.400 3.400" stroke="#fff" stroke-width="1.300"/></svg>
<div class="t" style="left:46px;top:192px;letter-spacing:-0.347px">exam</div>
<svg style="left:27px;top:216px" width="11" height="7" viewBox="0 0 11 7" ><path d="M1.4 1.3 5.6 5.3 9.8 1.3" fill="none" stroke="#3c3c3c" stroke-width="1.9"/></svg>
<svg style="left:44px;top:211px" width="17" height="17" viewBox="0 0 17 17" ><path d="M1.500 14.200V5.600l1.200-1.600h3.800L7.700 5.600h5v3" fill="#fdf3d4" stroke="#c99a4a" stroke-width="1" stroke-linejoin="round"/><path d="M1.5 14.200 4.500 8.600H16l-3.500 5.600Z" fill="#f9dc98" stroke="#c99a4a" stroke-width="1" stroke-linejoin="round"/><path d="M5 9.600h9.500" stroke="#fdf0cc" stroke-width="1"/><rect x="7.500" y="2.500" width="7" height="5.500" fill="#f6e2c8" stroke="#8a4a2a" stroke-width=".8"/><path d="M9.800 2v6.500M12.200 2v6.500M7 5.200h8" stroke="#8a4a2a" stroke-width=".8"/><path d="M3.5 9.399999999999999Q4.2 9.399999999999999 4.6 10.2L6.8 14.799999999999999Q7.2 16.2 5.8 16.2H1.2Q-0.2 16.2 0.2 14.799999999999999L2.4 10.2Q2.8 9.399999999999999 3.5 9.399999999999999Z" fill="#f9d672" stroke="#c88a24" stroke-width=".8"/><path d="M3.5 11.399999999999999v2.400M3.5 14.5v.8" stroke="#4a3206" stroke-width="1"/></svg>
<div class="t" style="left:65px;top:212px;letter-spacing:0.064px">src/main/java</div>
<svg style="left:48.2px;top:235px" width="7" height="11" viewBox="0 0 7 11" ><path d="M1.3 1.6 5.4 5.8 1.3 10" fill="none" stroke="#a3a3a3" stroke-width="1.9"/></svg>
<svg style="left:63px;top:231px" width="17" height="17" viewBox="0 0 17 17" ><rect x="4.500" y="5.500" width="8.500" height="8" fill="#edf3fc" stroke="#5e6778"/><path d="M8.700 4v10.600M3 9.500h11.300" stroke="#5e6778" stroke-width="1"/><path d="M3.5 9.399999999999999Q4.2 9.399999999999999 4.6 10.2L6.8 14.799999999999999Q7.2 16.2 5.8 16.2H1.2Q-0.2 16.2 0.2 14.799999999999999L2.4 10.2Q2.8 9.399999999999999 3.5 9.399999999999999Z" fill="#f9d672" stroke="#c88a24" stroke-width=".8"/><path d="M3.5 11.399999999999999v2.400M3.5 14.5v.8" stroke="#4a3206" stroke-width="1"/></svg>
<div class="t" style="left:84px;top:232px;letter-spacing:-0.055px">com.extr</div>
<svg style="left:29.2px;top:255px" width="7" height="11" viewBox="0 0 7 11" ><path d="M1.3 1.6 5.4 5.8 1.3 10" fill="none" stroke="#a3a3a3" stroke-width="1.9"/></svg>
<svg style="left:44px;top:251px" width="17" height="17" viewBox="0 0 17 17" ><path d="M1.500 14.200V5.600l1.200-1.600h3.800L7.700 5.600h5v3" fill="#fdf3d4" stroke="#c99a4a" stroke-width="1" stroke-linejoin="round"/><path d="M1.5 14.200 4.500 8.600H16l-3.500 5.600Z" fill="#f9dc98" stroke="#c99a4a" stroke-width="1" stroke-linejoin="round"/><path d="M5 9.600h9.500" stroke="#fdf0cc" stroke-width="1"/><rect x="7.500" y="2.500" width="7" height="5.500" fill="#f6e2c8" stroke="#8a4a2a" stroke-width=".8"/><path d="M9.800 2v6.500M12.200 2v6.500M7 5.200h8" stroke="#8a4a2a" stroke-width=".8"/></svg>
<div class="t" style="left:65px;top:252px;letter-spacing:0.100px">src/main/resources</div>
<svg style="left:44px;top:271px" width="17" height="17" viewBox="0 0 17 17" ><path d="M1.500 14.200V5.600l1.200-1.600h3.800L7.700 5.600h5v3" fill="#fdf3d4" stroke="#c99a4a" stroke-width="1" stroke-linejoin="round"/><path d="M1.5 14.200 4.500 8.600H16l-3.500 5.600Z" fill="#f9dc98" stroke="#c99a4a" stroke-width="1" stroke-linejoin="round"/><path d="M5 9.600h9.500" stroke="#fdf0cc" stroke-width="1"/><rect x="7.500" y="2.500" width="7" height="5.500" fill="#f6e2c8" stroke="#8a4a2a" stroke-width=".8"/><path d="M9.800 2v6.500M12.200 2v6.500M7 5.200h8" stroke="#8a4a2a" stroke-width=".8"/></svg>
<div class="t" style="left:65px;top:272px;letter-spacing:0.081px">src/test/java</div>
<svg style="left:29.2px;top:295px" width="7" height="11" viewBox="0 0 7 11" ><path d="M1.3 1.6 5.4 5.8 1.3 10" fill="none" stroke="#a3a3a3" stroke-width="1.9"/></svg>
<svg style="left:44px;top:291px" width="17" height="17" viewBox="0 0 17 17" ><rect x="1.200" y="5.800" width="7.800" height="2.600" fill="#2f7fb5" stroke="#1f5a8a" stroke-width=".5"/><rect x=".7" y="8.400" width="8.800" height="2.800" fill="#3fa070" stroke="#1f6a4a" stroke-width=".5"/><rect x=".3" y="11.200" width="9.400" height="3.400" fill="#b9642c" stroke="#7a3e14" stroke-width=".5"/><path d="M8.200 4.200 10.700 3.400 14.900 14.300 12.400 14.600Z" fill="#f5bb50" stroke="#b07a20" stroke-width=".8" stroke-linejoin="round"/></svg>
<div class="t" style="left:65px;top:292px;letter-spacing:-0.097px">Maven Dependencies</div>
<svg style="left:29.2px;top:315px" width="7" height="11" viewBox="0 0 7 11" ><path d="M1.3 1.6 5.4 5.8 1.3 10" fill="none" stroke="#a3a3a3" stroke-width="1.9"/></svg>
<svg style="left:44px;top:311px" width="17" height="17" viewBox="0 0 17 17" ><rect x="1.200" y="5.800" width="7.800" height="2.600" fill="#2f7fb5" stroke="#1f5a8a" stroke-width=".5"/><rect x=".7" y="8.400" width="8.800" height="2.800" fill="#3fa070" stroke="#1f6a4a" stroke-width=".5"/><rect x=".3" y="11.200" width="9.400" height="3.400" fill="#b9642c" stroke="#7a3e14" stroke-width=".5"/><path d="M8.200 4.200 10.700 3.400 14.900 14.300 12.400 14.600Z" fill="#f5bb50" stroke="#b07a20" stroke-width=".8" stroke-linejoin="round"/></svg>
<div class="t" style="left:65px;top:312px;letter-spacing:-0.088px">Referenced Libraries</div>
<svg style="left:29.2px;top:335px" width="7" height="11" viewBox="0 0 7 11" ><path d="M1.3 1.6 5.4 5.8 1.3 10" fill="none" stroke="#a3a3a3" stroke-width="1.9"/></svg>
<svg style="left:44px;top:331px" width="17" height="17" viewBox="0 0 17 17" ><rect x="1.200" y="5.800" width="7.800" height="2.600" fill="#2f7fb5" stroke="#1f5a8a" stroke-width=".5"/><rect x=".7" y="8.400" width="8.800" height="2.800" fill="#3fa070" stroke="#1f6a4a" stroke-width=".5"/><rect x=".3" y="11.200" width="9.400" height="3.400" fill="#b9642c" stroke="#7a3e14" stroke-width=".5"/><path d="M8.200 4.200 10.700 3.400 14.900 14.300 12.400 14.600Z" fill="#f5bb50" stroke="#b07a20" stroke-width=".8" stroke-linejoin="round"/></svg>
<div class="t" style="left:65px;top:332px;letter-spacing:-0.393px">JRE System Library <span class="dec">[JavaSE-1.8]</span></div>
<svg style="left:29.2px;top:355px" width="7" height="11" viewBox="0 0 7 11" ><path d="M1.3 1.6 5.4 5.8 1.3 10" fill="none" stroke="#a3a3a3" stroke-width="1.9"/></svg>
<svg style="left:44px;top:351px" width="17" height="17" viewBox="0 0 17 17" ><path d="M1.500 14.200V5.600l1.200-1.600h3.800L7.700 5.600h5v3" fill="#fdf3d4" stroke="#c99a4a" stroke-width="1" stroke-linejoin="round"/><path d="M1.5 14.200 4.500 8.600H16l-3.500 5.600Z" fill="#f9dc98" stroke="#c99a4a" stroke-width="1" stroke-linejoin="round"/><path d="M5 9.600h9.500" stroke="#fdf0cc" stroke-width="1"/></svg>
<div class="t" style="left:65px;top:352px;letter-spacing:-0.112px">.settings</div>
<svg style="left:29.2px;top:375px" width="7" height="11" viewBox="0 0 7 11" ><path d="M1.3 1.6 5.4 5.8 1.3 10" fill="none" stroke="#a3a3a3" stroke-width="1.9"/></svg>
<svg style="left:44px;top:371px" width="17" height="17" viewBox="0 0 17 17" ><path d="M1.500 14.200V5.600l1.200-1.600h3.800L7.700 5.600h5v3" fill="#fdf3d4" stroke="#c99a4a" stroke-width="1" stroke-linejoin="round"/><path d="M1.5 14.200 4.500 8.600H16l-3.500 5.600Z" fill="#f9dc98" stroke="#c99a4a" stroke-width="1" stroke-linejoin="round"/><path d="M5 9.600h9.500" stroke="#fdf0cc" stroke-width="1"/><path d="M14.1 0.7000000000000002H11.299999999999999Q10.5 0.7000000000000002 10.5 1.5V2.5Q10.5 3.3000000000000003 11.299999999999999 3.3000000000000003H13.1Q13.899999999999999 3.3000000000000003 13.899999999999999 4.1V5.2Q13.899999999999999 6.0 13.1 6.0H10.1" fill="none" stroke="#1212e6" stroke-width="1.450"/><path d="M3.5 9.399999999999999Q4.2 9.399999999999999 4.6 10.2L6.8 14.799999999999999Q7.2 16.2 5.8 16.2H1.2Q-0.2 16.2 0.2 14.799999999999999L2.4 10.2Q2.8 9.399999999999999 3.5 9.399999999999999Z" fill="#f9d672" stroke="#c88a24" stroke-width=".8"/><path d="M3.5 11.399999999999999v2.400M3.5 14.5v.8" stroke="#4a3206" stroke-width="1"/></svg>
<div class="t" style="left:65px;top:372px;letter-spacing:-0.210px">src</div>
<svg style="left:29.2px;top:395px" width="7" height="11" viewBox="0 0 7 11" ><path d="M1.3 1.6 5.4 5.8 1.3 10" fill="none" stroke="#a3a3a3" stroke-width="1.9"/></svg>
<svg style="left:44px;top:391px" width="17" height="17" viewBox="0 0 17 17" ><path d="M1.500 14.200V5.600l1.200-1.600h3.800L7.700 5.600h5v3" fill="#fdf3d4" stroke="#c99a4a" stroke-width="1" stroke-linejoin="round"/><path d="M1.5 14.200 4.500 8.600H16l-3.500 5.600Z" fill="#f9dc98" stroke="#c99a4a" stroke-width="1" stroke-linejoin="round"/><path d="M5 9.600h9.500" stroke="#fdf0cc" stroke-width="1"/></svg>
<div class="t" style="left:65px;top:392px;letter-spacing:0.260px">target</div>
<svg style="left:47px;top:413px" width="11" height="14" viewBox="0 0 11 14" ><path d="M.5 .5h7l3 3v10h-10Z" fill="#f4f7fc" stroke="#a9b4cc"/><path d="M7.500 .5v3h3Z" fill="#f3dc9c" stroke="#a9b4cc" stroke-linejoin="round"/><path d="M2.900 3h1.600l1 2.600L6.500 3h1.600L6.300 7.200 8.200 11.600H6.600L5.500 8.800 4.400 11.600H2.800L4.700 7.200Z" fill="#1d3468"/></svg>
<div class="t" style="left:65px;top:412px;letter-spacing:-0.203px">.classpath</div>
<div style="left:42px;top:430px;width:69px;height:20px;background:#d9d9d9"></div>
<svg style="left:47px;top:433px" width="11" height="14" viewBox="0 0 11 14" ><path d="M.5 .5h7l3 3v10h-10Z" fill="#f4f7fc" stroke="#a9b4cc"/><path d="M7.500 .5v3h3Z" fill="#f3dc9c" stroke="#a9b4cc" stroke-linejoin="round"/><path d="M2.900 3h1.600l1 2.600L6.500 3h1.600L6.300 7.200 8.200 11.600H6.600L5.500 8.800 4.400 11.600H2.800L4.700 7.200Z" fill="#1d3468"/></svg>
<div class="t" style="left:65px;top:432px;letter-spacing:0.184px">.project</div>
<svg style="left:47px;top:453px" width="11" height="14" viewBox="0 0 11 14" ><path d="M.5 .5h7l3 3v10h-10Z" fill="#f4f7fc" stroke="#a9b4cc"/><path d="M7.500 .5v3h3Z" fill="#f3dc9c" stroke="#a9b4cc" stroke-linejoin="round"/><path d="M2.500 3.500h4M2.500 5.500h6M2.500 7.500h6M2.500 9.500h6M2.500 11h4" stroke="#5f83c4" stroke-width="1"/></svg>
<div class="t" style="left:65px;top:452px;letter-spacing:-0.115px">.springBeans</div>
<svg style="left:46px;top:473px" width="15" height="15" viewBox="0 0 15 15" ><defs><linearGradient id="sq" x1="0" y1="0" x2="1" y2="1"><stop offset="0" stop-color="#6f9fe4"/><stop offset="1" stop-color="#cfe0f8"/></linearGradient></defs><rect x=".5" y=".5" width="11" height="13.500" fill="url(#sq)" stroke="#3a62ad"/><path d="M2.500 .5v13.500" stroke="#e6effc" stroke-width="1"/><rect x="4" y="2" width="6" height="4" fill="#dce8fa" opacity=".7"/><path d="M7.500 7.500h4l2 2v5h-6Z" fill="#fff" stroke="#b39a5a"/><path d="M9 10.500h3M9 12.500h3" stroke="#8aa0c8" stroke-width=".9"/></svg>
<div class="t" style="left:65px;top:472px;letter-spacing:-0.222px">examxx.sql</div>
<svg style="left:44px;top:493px" width="15" height="15" viewBox="0 0 15 15" ><g transform="translate(3,0)"><path d="M.5 .5h7l3 3v10h-10Z" fill="#f4f7fc" stroke="#a9b4cc"/><path d="M7.500 .5v3h3Z" fill="#f3dc9c" stroke="#a9b4cc" stroke-linejoin="round"/><path d="M2.500 3.500h4M2.500 5.500h6M2.500 7.500h6M2.500 9.500h6" stroke="#5f83c4" stroke-width="1"/></g><rect x=".3" y="7.300" width="5.800" height="1.900" fill="#2f6fb5"/><rect x=".1" y="9.200" width="6.400" height="2" fill="#3fa860"/><rect x="0" y="11.200" width="6.800" height="2" fill="#e0762a"/></svg>
<div class="t" style="left:65px;top:492px;letter-spacing:-0.026px">kaptcha-2.3.jar</div>
<svg style="left:44px;top:513px" width="15" height="15" viewBox="0 0 15 15" ><g transform="translate(3,0)"><path d="M.5 .5h7l3 3v10h-10Z" fill="#fff" stroke="#b8954a"/><path d="M7.500 .5v3h3Z" fill="#f3dc9c" stroke="#b8954a" stroke-linejoin="round"/><path d="M2.200 11.200V6h1.500L5.500 8.800 7.300 6h1.500v5.200H7.500V8L5.900 10.300h-.8L3.500 8v3.200Z" fill="#1f5aa0"/></g><rect x="0" y="7" width="7" height="7.200" fill="#e0323e"/><path d="M1.8 8.9l3.400 3.400M5.2 8.9l-3.400 3.400" stroke="#fff" stroke-width="1.300"/></svg>
<div class="t" style="left:65px;top:512px;letter-spacing:0.041px">pom.xml</div>
<svg style="left:46px;top:533.5px" width="13" height="13" viewBox="0 0 13 13" ><defs><radialGradient id="gg" cx=".38" cy=".3" r=".8"><stop offset="0" stop-color="#bfe0f6"/><stop offset=".45" stop-color="#3f96e0"/><stop offset="1" stop-color="#1a549c"/></radialGradient></defs><circle cx="6.500" cy="6.500" r="6.400" fill="url(#gg)"/><path d="M2.200 3.200Q4 .8 7.200 1.200 9 2 8.300 3.300 7 4 6.600 5.300 5.400 6.600 4.300 6.200 2.600 5.600 2.200 3.200Z" fill="#f4f7ea" opacity=".95"/><path d="M5.400 6.600Q7 6.200 8.300 7.300 8.800 9 7.800 10.400 7 11.800 6.200 11.300 5.600 9.600 5 8.200Z" fill="#7c9c3c"/><path d="M9.200 2.300Q11 3 11.600 4.800 10.600 5.200 9.800 4.200Z" fill="#9cb46a" opacity=".85"/></svg>
<div class="t" style="left:65px;top:532px;letter-spacing:-0.137px">qq_001.png</div>
<svg style="left:46px;top:553.5px" width="13" height="13" viewBox="0 0 13 13" ><defs><radialGradient id="gg" cx=".38" cy=".3" r=".8"><stop offset="0" stop-color="#bfe0f6"/><stop offset=".45" stop-color="#3f96e0"/><stop offset="1" stop-color="#1a549c"/></radialGradient></defs><circle cx="6.500" cy="6.500" r="6.400" fill="url(#gg)"/><path d="M2.200 3.200Q4 .8 7.200 1.200 9 2 8.300 3.300 7 4 6.600 5.300 5.400 6.600 4.300 6.200 2.600 5.600 2.200 3.200Z" fill="#f4f7ea" opacity=".95"/><path d="M5.400 6.600Q7 6.200 8.300 7.300 8.800 9 7.800 10.400 7 11.800 6.200 11.300 5.600 9.600 5 8.200Z" fill="#7c9c3c"/><path d="M9.200 2.300Q11 3 11.600 4.800 10.600 5.200 9.800 4.200Z" fill="#9cb46a" opacity=".85"/></svg>
<div class="t" style="left:65px;top:552px;letter-spacing:-0.137px">qq_002.png</div>
<svg style="left:46px;top:573.5px" width="13" height="13" viewBox="0 0 13 13" ><defs><radialGradient id="gg" cx=".38" cy=".3" r=".8"><stop offset="0" stop-color="#bfe0f6"/><stop offset=".45" stop-color="#3f96e0"/><stop offset="1" stop-color="#1a549c"/></radialGradient></defs><circle cx="6.500" cy="6.500" r="6.400" fill="url(#gg)"/><path d="M2.200 3.200Q4 .8 7.200 1.200 9 2 8.300 3.300 7 4 6.600 5.300 5.400 6.600 4.300 6.200 2.600 5.600 2.200 3.200Z" fill="#f4f7ea" opacity=".95"/><path d="M5.400 6.600Q7 6.200 8.300 7.300 8.800 9 7.800 10.400 7 11.800 6.200 11.300 5.600 9.600 5 8.200Z" fill="#7c9c3c"/><path d="M9.200 2.300Q11 3 11.600 4.800 10.600 5.200 9.800 4.200Z" fill="#9cb46a" opacity=".85"/></svg>
<div class="t" style="left:65px;top:572px;letter-spacing:-0.137px">qq_003.png</div>
<svg style="left:47px;top:593px" width="11" height="14" viewBox="0 0 11 14" ><path d="M.5 .5h7l3 3v10h-10Z" fill="#fbfaf2" stroke="#b9a66a"/><path d="M7.500 .5v3h3Z" fill="#f3dc9c" stroke="#b9a66a" stroke-linejoin="round"/><rect x="2" y="4.500" width="6.600" height="5.500" fill="#e4ecf8"/><text x="2.200" y="9.600" font-family="Liberation Serif, serif" font-weight="bold" font-size="6.500" fill="#2a4a98">W</text></svg>
<div class="t" style="left:65px;top:592px;letter-spacing:-0.016px">readme.md</div>
<svg style="left:10.2px;top:615px" width="7" height="11" viewBox="0 0 7 11" ><path d="M1.3 1.6 5.4 5.8 1.3 10" fill="none" stroke="#a3a3a3" stroke-width="1.9"/></svg>
<svg style="left:25px;top:611px" width="17" height="17" viewBox="0 0 17 17" ><path d="M1.500 14V5l1.200-1.600h3.600L7.500 5h5v4.600" fill="#fbeec8" stroke="#a89878" stroke-width="1" stroke-linejoin="round"/><path d="M1.5 14.200 4.500 9.600H16l-3.500 4.600Z" fill="#a6cbf5" stroke="#2c50b0" stroke-width="1" stroke-linejoin="round"/><path d="M5 10.600h9.500" stroke="#d6e8fc" stroke-width="1"/></svg>
<div class="t" style="left:46px;top:612px;letter-spacing:-0.235px">FlexFramework</div>
<svg style="left:10.2px;top:635px" width="7" height="11" viewBox="0 0 7 11" ><path d="M1.3 1.6 5.4 5.8 1.3 10" fill="none" stroke="#a3a3a3" stroke-width="1.9"/></svg>
<svg style="left:25px;top:631px" width="17" height="17" viewBox="0 0 17 17" ><path d="M1.500 14V5l1.200-1.600h3.600L7.500 5h2.300v4.600" fill="#fbeec8" stroke="#a89878" stroke-width="1" stroke-linejoin="round"/><path d="M1.5 14.200 4.500 9.600H16l-3.500 4.600Z" fill="#a6cbf5" stroke="#2c50b0" stroke-width="1" stroke-linejoin="round"/><path d="M5 10.600h9.500" stroke="#d6e8fc" stroke-width="1"/><circle cx="4" cy="4.500" r="3.400" fill="#5b8fd0" stroke="#2f5a98" stroke-width=".6"/><path d="M2 3.500q2-2 4-.5q-.5 2.500-2.500 1.500ZM3 6.500q1.500-.5 2.500 1" fill="#8fd06a"/><path d="M14.2 1.4000000000000004v4.600q0 1.700-1.600 1.700t-1.600-1.400" fill="none" stroke="#3a5aad" stroke-width="1.100"/></svg>
<div class="t" style="left:46px;top:632px;letter-spacing:-0.004px">GameHuarongdao</div>
<svg style="left:25px;top:651px" width="17" height="17" viewBox="0 0 17 17" ><defs><linearGradient id="cf" x1="0" y1="0" x2="0" y2="1"><stop offset="0" stop-color="#d3e4fa"/><stop offset="1" stop-color="#8db4ec"/></linearGradient></defs><path d="M4 2.700 4.800 1h4l.8 1.700" fill="#f8efcf" stroke="#9a968a" stroke-width=".9"/><path d="M.8 2.700h13.900v8q0 1.500-1.500 1.500H2.300q-1.500 0-1.500-1.500Z" fill="url(#cf)" stroke="#3a5aa8" stroke-width="1"/></svg>
<div class="t" style="left:46px;top:652px;letter-spacing:0.160px">java-chatgpt-wechat-bot</div>
<svg style="left:10.2px;top:675px" width="7" height="11" viewBox="0 0 7 11" ><path d="M1.3 1.6 5.4 5.8 1.3 10" fill="none" stroke="#a3a3a3" stroke-width="1.9"/></svg>
<svg style="left:25px;top:671px" width="17" height="17" viewBox="0 0 17 17" ><path d="M1.500 14V5l1.200-1.600h3.600L7.500 5h2.300v4.600" fill="#fbeec8" stroke="#a89878" stroke-width="1" stroke-linejoin="round"/><path d="M1.5 14.200 4.500 9.600H16l-3.500 4.600Z" fill="#a6cbf5" stroke="#2c50b0" stroke-width="1" stroke-linejoin="round"/><path d="M5 10.600h9.500" stroke="#d6e8fc" stroke-width="1"/><path d="M14.2 1.4000000000000004v4.600q0 1.700-1.600 1.700t-1.600-1.400" fill="none" stroke="#3a5aad" stroke-width="1.100"/><path d="M3.5 9.399999999999999Q4.2 9.399999999999999 4.6 10.2L6.8 14.799999999999999Q7.2 16.2 5.8 16.2H1.2Q-0.2 16.2 0.2 14.799999999999999L2.4 10.2Q2.8 9.399999999999999 3.5 9.399999999999999Z" fill="#f9d672" stroke="#c88a24" stroke-width=".8"/><path d="M3.5 11.399999999999999v2.400M3.5 14.5v.8" stroke="#4a3206" stroke-width="1"/></svg>
<div class="t" style="left:46px;top:672px;letter-spacing:-0.235px">JavaFramework</div>
<svg style="left:10.2px;top:695px" width="7" height="11" viewBox="0 0 7 11" ><path d="M1.3 1.6 5.4 5.8 1.3 10" fill="none" stroke="#a3a3a3" stroke-width="1.9"/></svg>
<svg style="left:25px;top:691px" width="17" height="17" viewBox="0 0 17 17" ><path d="M1.500 14V5l1.200-1.600h3.600L7.500 5h2.300v4.600" fill="#fbeec8" stroke="#a89878" stroke-width="1" stroke-linejoin="round"/><path d="M1.5 14.200 4.500 9.600H16l-3.500 4.600Z" fill="#a6cbf5" stroke="#2c50b0" stroke-width="1" stroke-linejoin="round"/><path d="M5 10.600h9.500" stroke="#d6e8fc" stroke-width="1"/><path d="M14.2 1.4000000000000004v4.600q0 1.700-1.600 1.700t-1.600-1.400" fill="none" stroke="#3a5aad" stroke-width="1.100"/></svg>
<div class="t" style="left:46px;top:692px;letter-spacing:-0.153px">JavaFrameworkTest</div>
<svg style="left:10.2px;top:715px" width="7" height="11" viewBox="0 0 7 11" ><path d="M1.3 1.6 5.4 5.8 1.3 10" fill="none" stroke="#a3a3a3" stroke-width="1.9"/></svg>
<svg style="left:25px;top:711px" width="17" height="17" viewBox="0 0 17 17" ><path d="M1.500 14.200V7.600" stroke="#2c50b0" stroke-width="1"/><path d="M2 7h7v2.600H4.500L2 13.500Z" fill="#fbeec8"/><path d="M1.5 14.200 4.500 9.600H16l-3.500 4.600Z" fill="#a6cbf5" stroke="#2c50b0" stroke-width="1" stroke-linejoin="round"/><path d="M5 10.600h9.500" stroke="#d6e8fc" stroke-width="1"/><path d="M1 5.8V2h1.200l1.200 1.900L4.6 2H5.8v3.800H4.7V3.7l-1 1.500h-.6l-1-1.500v2.100Z" fill="#1f4a8a"/><path d="M7 3.5l1.200 .9-1.200 .9M8.3 4.4h.8" stroke="#e0b030" stroke-width=".9" fill="none"/><path d="M15.1 1.7000000000000002H12.299999999999999Q11.5 1.7000000000000002 11.5 2.5V3.5Q11.5 4.300000000000001 12.299999999999999 4.300000000000001H14.1Q14.899999999999999 4.300000000000001 14.899999999999999 5.1V6.2Q14.899999999999999 7.0 14.1 7.0H11.1" fill="none" stroke="#1212e6" stroke-width="1.450"/></svg>
<div class="t" style="left:46px;top:712px;letter-spacing:-0.037px">boot-and-cy-vue-online <span class="dec">[boot]</span></div>
</div>
<div style="left:283px;top:75px;width:1176px;height:653px;background:#e4f4e4;border:1px solid #c3c3c0;border-radius:6px 6px 5px 5px;overflow:hidden">
<div style="left:0;top:0;width:1174px;height:25px;background:#d3e0f0;border-bottom:1px solid #adb4ca"></div>
<svg style="left:7px;top:6px" width="11" height="14" viewBox="0 0 11 14" ><path d="M.5 .5h7l3 3v10h-10Z" fill="#fff" stroke="#b8954a"/><path d="M7.500 .5v3h3Z" fill="#f3dc9c" stroke="#b8954a" stroke-linejoin="round"/><path d="M2.200 11.200V6h1.500L5.500 8.800 7.300 6h1.500v5.200H7.500V8L5.900 10.300h-.8L3.500 8v3.200Z" fill="#1f5aa0"/></svg>
<div class="t" style="left:24px;top:6px;letter-spacing:0.168px">test/pom.xml</div>
<svg style="left:133px;top:6px" width="11" height="14" viewBox="0 0 11 14" ><path d="M.5 .5h7l3 3v10h-10Z" fill="#fff" stroke="#b8954a"/><path d="M7.500 .5v3h3Z" fill="#f3dc9c" stroke="#b8954a" stroke-linejoin="round"/><path d="M2.200 11.200V6h1.500L5.500 8.800 7.300 6h1.500v5.200H7.500V8L5.900 10.300h-.8L3.500 8v3.200Z" fill="#1f5aa0"/></svg>
<div class="t" style="left:149px;top:6px;letter-spacing:0.004px">jeecg-cloud-...</div>
<svg style="left:266px;top:6px" width="11" height="14" viewBox="0 0 11 14" ><path d="M.5 .5h7l3 3v10h-10Z" fill="#fff" stroke="#b8954a"/><path d="M7.500 .5v3h3Z" fill="#f3dc9c" stroke="#b8954a" stroke-linejoin="round"/><path d="M2.200 11.200V6h1.500L5.500 8.800 7.300 6h1.500v5.200H7.500V8L5.900 10.300h-.8L3.500 8v3.200Z" fill="#1f5aa0"/></svg>
<div class="t" style="left:283px;top:6px;letter-spacing:0.154px">jeecg-boot-p...</div>
<svg style="left:403px;top:6px" width="11" height="14" viewBox="0 0 11 14" ><path d="M.5 .5h7l3 3v10h-10Z" fill="#fff" stroke="#b8954a"/><path d="M7.500 .5v3h3Z" fill="#f3dc9c" stroke="#b8954a" stroke-linejoin="round"/><path d="M2.200 11.200V6h1.500L5.500 8.800 7.300 6h1.500v5.200H7.500V8L5.900 10.300h-.8L3.500 8v3.200Z" fill="#1f5aa0"/></svg>
<div class="t" style="left:420px;top:6px;letter-spacing:-0.036px">PMS/pom.xml</div>
<svg style="left:534px;top:6px" width="11" height="14" viewBox="0 0 11 14" ><path d="M.5 .5h7l3 3v10h-10Z" fill="#f4f7fc" stroke="#a9b4cc"/><path d="M7.500 .5v3h3Z" fill="#f3dc9c" stroke="#a9b4cc" stroke-linejoin="round"/><path d="M2.900 3h1.600l1 2.600L6.500 3h1.600L6.300 7.200 8.200 11.600H6.600L5.500 8.800 4.400 11.600H2.800L4.700 7.200Z" fill="#1d3468"/></svg>
<div class="t" style="left:551px;top:6px;letter-spacing:-0.102px">settings.xml</div>
<svg style="left:652px;top:6px" width="11" height="14" viewBox="0 0 11 14" ><path d="M.5 .5h7l3 3v10h-10Z" fill="#f4f7fc" stroke="#a9b4cc"/><path d="M7.500 .5v3h3Z" fill="#f3dc9c" stroke="#a9b4cc" stroke-linejoin="round"/><path d="M2.900 3h1.600l1 2.600L6.500 3h1.600L6.300 7.200 8.200 11.600H6.600L5.500 8.800 4.400 11.600H2.800L4.700 7.200Z" fill="#1d3468"/></svg>
<div class="t" style="left:668px;top:6px;letter-spacing:-0.350px">settings - </div>
<svg style="left:782px;top:6px" width="11" height="14" viewBox="0 0 11 14" ><path d="M.5 .5h7l3 3v10h-10Z" fill="#f4f7fc" stroke="#a9b4cc"/><path d="M7.500 .5v3h3Z" fill="#f3dc9c" stroke="#a9b4cc" stroke-linejoin="round"/><path d="M2.900 3h1.600l1 2.600L6.500 3h1.600L6.300 7.200 8.200 11.600H6.600L5.500 8.800 4.400 11.600H2.800L4.700 7.200Z" fill="#1d3468"/></svg>
<div class="t" style="left:798px;top:6px;letter-spacing:-0.153px">.classpath</div>
<svg style="left:889px;top:6px" width="11" height="14" viewBox="0 0 11 14" ><path d="M.5 .5h7l3 3v10h-10Z" fill="#fff" stroke="#b8954a"/><path d="M7.500 .5v3h3Z" fill="#f3dc9c" stroke="#b8954a" stroke-linejoin="round"/><path d="M2.200 11.200V6h1.500L5.500 8.800 7.300 6h1.500v5.200H7.500V8L5.900 10.300h-.8L3.500 8v3.200Z" fill="#1f5aa0"/></svg>
<div class="t" style="left:906px;top:6px;letter-spacing:0.082px">exam/pom.xml</div>
<svg style="left:725.5px;top:8.5px" width="11" height="11" viewBox="0 0 11 11" ><path d="M.3 1h5.800" stroke="#111" stroke-width="1"/><rect x="1.200" y="2.700" width="4" height="2" fill="none" stroke="#111" stroke-width=".9"/><rect x=".6" y="6.200" width="5.200" height="4" fill="none" stroke="#111" stroke-width=".9"/><path d="M3.200 6.200v4M.6 8.200h5.200" stroke="#111" stroke-width=".8"/><path d="M7.600 1.800v6" stroke="#111" stroke-width="1"/><path d="M9.500 .3v9.500q0 1-1.500 .7" stroke="#111" stroke-width="1" fill="none"/></svg>
<div class="t" style="left:736px;top:6px;letter-spacing:0.055px">...</div>
<div style="left:1018px;top:-1px;width:95px;height:27px;background:#e1f3e1;border:1px solid #b9b9b4;border-bottom:none;border-radius:6px 6px 0 0"></div>
<svg style="left:1025px;top:6px" width="11" height="14" viewBox="0 0 11 14" ><path d="M.5 .5h7l3 3v10h-10Z" fill="#f4f7fc" stroke="#a9b4cc"/><path d="M7.500 .5v3h3Z" fill="#f3dc9c" stroke="#a9b4cc" stroke-linejoin="round"/><path d="M2.900 3h1.600l1 2.600L6.500 3h1.600L6.300 7.200 8.200 11.600H6.600L5.500 8.800 4.400 11.600H2.800L4.700 7.200Z" fill="#1d3468"/></svg>
<div class="t" style="left:1042px;top:6px;letter-spacing:0.234px">.project</div>
<svg style="left:1094px;top:8px" width="10" height="10" viewBox="0 0 10 10" ><path d="M.6 2.300 2.300 .6 5 3.300 7.700 .6 9.400 2.300 6.700 5 9.400 7.700 7.700 9.400 5 6.700 2.300 9.400 .6 7.700 3.300 5Z" fill="#fff" stroke="#4a4a4a" stroke-width="1.1" stroke-linejoin="miter"/></svg>
<svg style="left:1127px;top:7px" width="10" height="4" viewBox="0 0 10 4" ><rect x=".5" y=".5" width="9" height="3" fill="#fff" stroke="#5a5a5a"/></svg>
<svg style="left:1150px;top:7px" width="10" height="10" viewBox="0 0 10 10" ><rect x=".5" y=".5" width="9" height="9" fill="#fff" stroke="#5a5a5a"/><path d="M.5 1.5h9" stroke="#5a5a5a" stroke-width="1.4"/></svg>
<div style="left:2px;top:25px;width:1141px;height:585px;background:#e1f3e1;overflow:hidden">
<div style="left:0;top:2px;width:12px;height:583px;background:#f7f7f7"></div>
<div style="left:37px;top:2px;width:1px;height:583px;background:#f0f8f0"></div>
<div class="ln" style="top:-9px">36</div>
<div class="code" style="left:136px;top:-9px"><span class="tg">&lt;/arguments&gt;</span></div>
<div class="ln" style="top:8px">37</div>
<div class="code" style="left:104px;top:8px"><span class="tg">&lt;/buildCommand&gt;</span></div>
<div class="ln" style="top:25px">38</div>
<svg style="left:27.5px;top:27px" width="9" height="9" viewBox="0 0 9 9" ><circle cx="4.5" cy="4.5" r="4" fill="#d6e3f5" stroke="#b6c0dc" stroke-width=".9"/><path d="M2.2 4.5h4.600" stroke="#56607a" stroke-width="1.200"/></svg>
<div class="code" style="left:104px;top:25px"><span class="tg">&lt;buildCommand&gt;</span></div>
<div class="ln" style="top:42px">39</div>
<div class="code" style="left:136px;top:42px"><span class="tg">&lt;name&gt;</span>com.genuitec.eclipse.ast.deploy.core.DeploymentBuilder<span class="tg">&lt;/name&gt;</span></div>
<div class="ln" style="top:59px">40</div>
<svg style="left:27.5px;top:61px" width="9" height="9" viewBox="0 0 9 9" ><circle cx="4.5" cy="4.5" r="4" fill="#d6e3f5" stroke="#b6c0dc" stroke-width=".9"/><path d="M2.2 4.5h4.600" stroke="#56607a" stroke-width="1.200"/></svg>
<div class="code" style="left:136px;top:59px"><span class="tg">&lt;arguments&gt;</span></div>
<div class="ln" style="top:76px">41</div>
<div class="code" style="left:136px;top:76px"><span class="tg">&lt;/arguments&gt;</span></div>
<div class="ln" style="top:93px">42</div>
<div class="code" style="left:104px;top:93px"><span class="tg">&lt;/buildCommand&gt;</span></div>
<div class="ln" style="top:110px">43</div>
<svg style="left:27.5px;top:112px" width="9" height="9" viewBox="0 0 9 9" ><circle cx="4.5" cy="4.5" r="4" fill="#d6e3f5" stroke="#b6c0dc" stroke-width=".9"/><path d="M2.2 4.5h4.600" stroke="#56607a" stroke-width="1.200"/></svg>
<div class="code" style="left:104px;top:110px"><span class="tg">&lt;buildCommand&gt;</span></div>
<div class="ln" style="top:127px">44</div>
<div class="code" style="left:136px;top:127px"><span class="tg">&lt;name&gt;</span>org.springframework.ide.eclipse.core.springbuilder<span class="tg">&lt;/name&gt;</span></div>
<div class="ln" style="top:144px">45</div>
<svg style="left:27.5px;top:146px" width="9" height="9" viewBox="0 0 9 9" ><circle cx="4.5" cy="4.5" r="4" fill="#d6e3f5" stroke="#b6c0dc" stroke-width=".9"/><path d="M2.2 4.5h4.600" stroke="#56607a" stroke-width="1.200"/></svg>
<div class="code" style="left:136px;top:144px"><span class="tg">&lt;arguments&gt;</span></div>
<div class="ln" style="top:161px">46</div>
<div class="code" style="left:136px;top:161px"><span class="tg">&lt;/arguments&gt;</span></div>
<div class="ln" style="top:178px">47</div>
<div class="code" style="left:104px;top:178px"><span class="tg">&lt;/buildCommand&gt;</span></div>
<div class="ln" style="top:195px">48</div>
<svg style="left:27.5px;top:197px" width="9" height="9" viewBox="0 0 9 9" ><circle cx="4.5" cy="4.5" r="4" fill="#d6e3f5" stroke="#b6c0dc" stroke-width=".9"/><path d="M2.2 4.5h4.600" stroke="#56607a" stroke-width="1.200"/></svg>
<div class="code" style="left:104px;top:195px"><span class="tg">&lt;buildCommand&gt;</span></div>
<div class="ln" style="top:212px">49</div>
<div class="code" style="left:136px;top:212px"><span class="tg">&lt;name&gt;</span>org.springframework.ide.eclipse.boot.validation.springbootbuilder<span class="tg">&lt;/name&gt;</span></div>
<div class="ln" style="top:229px">50</div>
<svg style="left:27.5px;top:231px" width="9" height="9" viewBox="0 0 9 9" ><circle cx="4.5" cy="4.5" r="4" fill="#d6e3f5" stroke="#b6c0dc" stroke-width=".9"/><path d="M2.2 4.5h4.600" stroke="#56607a" stroke-width="1.200"/></svg>
<div class="code" style="left:136px;top:229px"><span class="tg">&lt;arguments&gt;</span></div>
<div class="ln" style="top:246px">51</div>
<div class="code" style="left:136px;top:246px"><span class="tg">&lt;/arguments&gt;</span></div>
<div class="ln" style="top:263px">52</div>
<div class="code" style="left:104px;top:263px"><span class="tg">&lt;/buildCommand&gt;</span></div>
<div class="ln" style="top:280px">53</div>
<svg style="left:27.5px;top:282px" width="9" height="9" viewBox="0 0 9 9" ><circle cx="4.5" cy="4.5" r="4" fill="#d6e3f5" stroke="#b6c0dc" stroke-width=".9"/><path d="M2.2 4.5h4.600" stroke="#56607a" stroke-width="1.200"/></svg>
<div class="code" style="left:104px;top:280px"><span class="tg">&lt;buildCommand&gt;</span></div>
<div class="ln" style="top:297px">54</div>
<div class="code" style="left:136px;top:297px"><span class="tg">&lt;name&gt;</span>org.eclipse.m2e.core.maven2Builder<span class="tg">&lt;/name&gt;</span></div>
<div class="ln" style="top:314px">55</div>
<svg style="left:27.5px;top:316px" width="9" height="9" viewBox="0 0 9 9" ><circle cx="4.5" cy="4.5" r="4" fill="#d6e3f5" stroke="#b6c0dc" stroke-width=".9"/><path d="M2.2 4.5h4.600" stroke="#56607a" stroke-width="1.200"/></svg>
<div class="code" style="left:136px;top:314px"><span class="tg">&lt;arguments&gt;</span></div>
<div class="ln" style="top:331px">56</div>
<div class="code" style="left:136px;top:331px"><span class="tg">&lt;/arguments&gt;</span></div>
<div class="ln" style="top:348px">57</div>
<div class="code" style="left:104px;top:348px"><span class="tg">&lt;/buildCommand&gt;</span></div>
<div class="ln" style="top:365px">58</div>
<div class="code" style="left:72px;top:365px"><span class="tg">&lt;/buildSpec&gt;</span></div>
<div class="ln" style="top:382px">59</div>
<svg style="left:27.5px;top:384px" width="9" height="9" viewBox="0 0 9 9" ><circle cx="4.5" cy="4.5" r="4" fill="#d6e3f5" stroke="#b6c0dc" stroke-width=".9"/><path d="M2.2 4.5h4.600" stroke="#56607a" stroke-width="1.200"/></svg>
<div class="code" style="left:72px;top:382px"><span class="tg">&lt;natures&gt;</span></div>
<div class="ln" style="top:399px">60</div>
<div class="code" style="left:104px;top:399px"><span class="tg">&lt;nature&gt;</span>org.springframework.ide.eclipse.core.springnature<span class="tg">&lt;/nature&gt;</span></div>
<div class="ln" style="top:416px">61</div>
<div class="code" style="left:104px;top:416px"><span class="tg">&lt;nature&gt;</span>org.eclipse.jem.workbench.JavaEMFNature<span class="tg">&lt;/nature&gt;</span></div>
<div class="ln" style="top:433px">62</div>
<div class="code" style="left:104px;top:433px"><span class="tg">&lt;nature&gt;</span>org.eclipse.wst.common.modulecore.ModuleCoreNature<span class="tg">&lt;/nature&gt;</span></div>
<div style="left:40px;top:449px;width:1101px;height:17px;background:#e8f2fe"></div>
<div style="left:0;top:449px;width:12px;height:17px;background:#5b9be0;background-image:repeating-conic-gradient(#3f86d8 0 25%,#a8cbf0 0 50%);background-size:2px 2px"></div>
<div style="left:168px;top:449px;width:393px;height:17px;background:#0a6cce"></div>
<div style="left:561px;top:449px;width:1px;height:17px;background:#000"></div>
<div class="ln" style="top:450px">63</div>
<div class="code" style="left:104px;top:450px"><span class="tg">&lt;nature&gt;</span><span style="position:static;color:#fff">com.genuitec.eclipse.springframework.springnature</span><span class="tg">&lt;/nature&gt;</span></div>
<div class="ln" style="top:467px">64</div>
<div class="code" style="left:104px;top:467px"><span class="tg">&lt;nature&gt;</span>org.eclipse.jdt.core.javanature<span class="tg">&lt;/nature&gt;</span></div>
<div class="ln" style="top:484px">65</div>
<div class="code" style="left:104px;top:484px"><span class="tg">&lt;nature&gt;</span>org.eclipse.m2e.core.maven2Nature<span class="tg">&lt;/nature&gt;</span></div>
<div class="ln" style="top:501px">66</div>
<div class="code" style="left:104px;top:501px"><span class="tg">&lt;nature&gt;</span>org.eclipse.wst.common.project.facet.core.nature<span class="tg">&lt;/nature&gt;</span></div>
<div class="ln" style="top:518px">67</div>
<div class="code" style="left:104px;top:518px"><span class="tg">&lt;nature&gt;</span>org.eclipse.wst.jsdt.core.jsNature<span class="tg">&lt;/nature&gt;</span></div>
<div class="ln" style="top:535px">68</div>
<div class="code" style="left:72px;top:535px"><span class="tg">&lt;/natures&gt;</span></div>
<div class="ln" style="top:552px">69</div>
<div class="code" style="left:40px;top:552px"><span class="tg">&lt;/projectDescription&gt;</span></div>
<div class="ln" style="top:569px">70</div>
<div style="left:0;top:0;width:1141px;height:2px;background:#e1f3e1"></div>
</div>
<div style="left:1142px;top:27px;width:1px;height:583px;background:#fff"></div>
<div style="left:1143px;top:27px;width:15.500px;height:583px;background:#f0f0f0"></div>
<div style="left:1158.500px;top:27px;width:13.500px;height:600px;background:#f8f8f8"></div>
<div style="left:1143px;top:324px;width:15px;height:269px;background:#cdcdcd"></div>
<svg style="left:1146px;top:33px" width="9" height="7" viewBox="0 0 9 7" ><path d="M1 5.400 4.500 1.900 8 5.400" fill="none" stroke="#444" stroke-width="2.100"/></svg>
<svg style="left:1146px;top:599px" width="9" height="7" viewBox="0 0 9 7" ><path d="M1 1.400 4.500 4.900 8 1.400" fill="none" stroke="#444" stroke-width="2.100"/></svg>
<div style="left:2px;top:610px;width:38px;height:17px;background:#f7f7f7"></div>
<div style="left:40px;top:610px;width:1103px;height:17px;background:#f0f0f0;border-top:1px solid #fff"></div>
<div style="left:1143px;top:610px;width:15.500px;height:17px;background:#f0f0f0"></div>
<svg style="left:44.6px;top:614px" width="7" height="10" viewBox="0 0 7 10" ><path d="M5.400 1.800 2 5 5.400 8.200" fill="none" stroke="#bcbcbc" stroke-width="2.200"/></svg>
<svg style="left:1130.5px;top:614px" width="7" height="10" viewBox="0 0 7 10" ><path d="M1.600 1.800 5 5 1.600 8.200" fill="none" stroke="#bcbcbc" stroke-width="2.200"/></svg>
<div style="left:2px;top:627px;width:1170px;height:22px;background:#cddcec;border-top:1px solid #8c8c8c"></div>
<div style="left:49.500px;top:627px;width:48px;height:22px;background:#fff;border:1px solid #8e8e96;border-top:none;border-radius:0 0 4px 4px"></div>
<div class="t" style="left:6px;top:630px;letter-spacing:-0.211px">Design</div>
<div class="t" style="left:54px;top:630px;letter-spacing:-0.331px">Source</div>
</div>
<div style="left:283px;top:732px;width:1176px;height:70px;background:#fff;border-radius:7px 7px 0 0;overflow:hidden">
<div style="left:0;top:0;width:1176px;height:26px;background:#f3f4fb"></div>
<div style="left:326px;top:0;width:102px;height:26px;background:linear-gradient(#d9dfee,#ebeef6 50%,#fff 92%);border-radius:7px 7px 0 0"></div>
<svg style="left:4px;top:6px" width="16" height="16" viewBox="0 0 16 16"  opacity=".6"><path d="M1.500 13V1.500h7" fill="none" stroke="#c9b88a"/><circle cx="6" cy="4.500" r="2.600" fill="#e86a74"/><path d="M9.500 1.500h2.500q2 0 2 2.500t-2 3l2.500 6H12L10 8" fill="#e3ebf6" stroke="#9aaac8" stroke-width=".9"/><rect x="1" y="7.500" width="7" height="7.500" fill="#e0323e"/><path d="M2.800 9.500l3.400 3.500M6.200 9.500l-3.400 3.500" stroke="#fff" stroke-width="1.200"/></svg>
<div class="t" style="left:24px;top:7px;letter-spacing:-0.076px;color:#858585">Problems</div>
<svg style="left:90px;top:5px" width="15" height="16" viewBox="0 0 15 16"  opacity=".6"><path d="M1.500 .5h6l3 3v7.500h-9Z" fill="#fffdf4" stroke="#c9a85a"/><path d="M5 3.500q-1.200 0-1.200 1.200t-1 1.300q1 .1 1 1.300T5 8.500M6.500 5h2.500M6.500 7h2.500" fill="none" stroke="#4a78c0" stroke-width=".9"/><path d="M6.500 10.500h4V8.500l4 3.500-4 3.500v-2h-4Z" fill="#fbd66a" stroke="#b8821a" stroke-width=".8"/></svg>
<div class="t" style="left:108px;top:7px;letter-spacing:0.032px;color:#858585">Declaration</div>
<svg style="left:184px;top:5px" width="16" height="16" viewBox="0 0 16 16"  opacity=".6"><path d="M.8 15.200 2.800 10.500 6 13Z" fill="#fdf2b8" stroke="#e6d28a" stroke-width=".6"/><path d="M2.800 10.500 5.500 7l4 3L6 13Z" fill="#9a9a9a" stroke="#6a6a6a" stroke-width=".6"/><path d="M5.500 7 11.500 1l4 3L9.500 10Z" fill="#f3d89a" stroke="#c09a4a" stroke-width=".8"/><path d="M11.500 3.500l1.200 .9" stroke="#6a4a1a" stroke-width="1.600"/></svg>
<div class="t" style="left:205px;top:7px;letter-spacing:-0.398px;color:#858585">Search</div>
<svg style="left:255px;top:6px" width="14" height="15" viewBox="0 0 14 15"  opacity=".6"><rect x="1" y="1" width="12" height="9.500" rx="1.200" fill="#3d6dc0" stroke="#274e96"/><rect x="2.800" y="2.800" width="8.400" height="6" fill="#f4f8ff"/><path d="M4 4.800h6M4 6.800h4" stroke="#3d6dc0" stroke-width="1"/><path d="M5.500 11h3v1.800h-3Z" fill="#3d6dc0"/><path d="M3 13.800h8" stroke="#274e96" stroke-width="1.800"/></svg>
<div class="t" style="left:273px;top:7px;letter-spacing:-0.071px;color:#858585">Console</div>
<svg style="left:332px;top:6px" width="15" height="16" viewBox="0 0 15 16" ><rect x=".5" y="3.500" width="13" height="4.400" fill="#3f9a4a" stroke="#2a7a36"/><path d="M1.500 4.700h11" stroke="#8fd09a" stroke-width="1"/><path d="M1.500 8.500v4h6" fill="none" stroke="#b8c0c8" stroke-width="1"/><circle cx="10.800" cy="11.300" r="3.700" fill="#2f9a3a" stroke="#1a6a24" stroke-width=".8"/><path d="M9.600 9.300 13 11.300 9.600 13.300Z" fill="#fff"/></svg>
<div class="t" style="left:350px;top:7px;letter-spacing:-0.065px">Progress</div>
<svg style="left:432px;top:6px" width="15" height="16" viewBox="0 0 15 16"  opacity=".6"><path d="M3 1v13.500M7.500 1v13.500M12 1v13.500" stroke="#5a7aa8" stroke-width="1.200"/><path d="M.5 7.500h5M5 4h5M9.500 10h5" stroke="#5a7aa8" stroke-width="1"/><rect x="1.300" y="5.500" width="3.400" height="4.200" rx="1" fill="#c9d66a" stroke="#5a7aa8" stroke-width=".8"/><rect x="5.800" y="2" width="3.400" height="4.200" rx="1" fill="#f3d26a" stroke="#5a7aa8" stroke-width=".8"/><rect x="10.300" y="8" width="3.400" height="4.200" rx="1" fill="#6a9ae0" stroke="#5a7aa8" stroke-width=".8"/></svg>
<div class="t" style="left:450px;top:7px;letter-spacing:-0.327px;color:#858585">Servers</div>
<svg style="left:503px;top:6px" width="18" height="16" viewBox="0 0 18 16"  opacity=".6"><rect x="6.500" y=".5" width="10" height="8" rx=".8" fill="#e6e6e6" stroke="#7a7a7a"/><rect x="8" y="2" width="7" height="5" fill="#3a6ae0"/><path d="M8.500 3h3" stroke="#9ac0ff" stroke-width="1"/><path d="M1 14 4.500 8.500l2.500-.5 2 2L8.500 12 3 15.500Z" fill="#c4c4c4" stroke="#7a7a7a" stroke-width=".8"/><path d="M2 13.500l2 1.500" stroke="#fff" stroke-width="1"/></svg>
<div class="t" style="left:523px;top:7px;letter-spacing:0.060px;color:#858585">Terminal</div>
<svg style="left:409px;top:10px" width="10" height="10" viewBox="0 0 10 10" ><path d="M.6 2.300 2.300 .6 5 3.300 7.700 .6 9.400 2.300 6.700 5 9.400 7.700 7.700 9.400 5 6.700 2.300 9.400 .6 7.700 3.300 5Z" fill="#fff" stroke="#4a4a4a" stroke-width="1.1" stroke-linejoin="miter"/></svg>
<svg style="left:1076.5px;top:5px" width="17" height="17" viewBox="0 0 17 17" ><path d="M2.5 0.5 6.0 4.0 9.5 0.5 11.5 2.5 8.0 6.0 11.5 9.5 9.5 11.5 6.0 8.0 2.5 11.5 0.5 9.5 4.0 6.0 0.5 2.5Z" fill="#d9d9d9" stroke="#9a9a9a" stroke-width=".8"/><path d="M6.5 5 10.0 8.5 13.5 5 15.5 7 12.0 10.5 15.5 14 13.5 16 10.0 12.5 6.5 16 4.5 14 8.0 10.5 4.5 7Z" fill="#7a7a7a" stroke="#5a5a5a" stroke-width=".8"/></svg>
<svg style="left:1108px;top:8px" width="10" height="6" viewBox="0 0 10 6" ><path d="M.8 .5h8.400L5 4.800Z" fill="#fff" stroke="#5a5a5a" stroke-width="1"/></svg>
<svg style="left:1128px;top:8px" width="10" height="4" viewBox="0 0 10 4" ><rect x=".5" y=".5" width="9" height="3" fill="#fff" stroke="#5a5a5a"/></svg>
<svg style="left:1151px;top:8px" width="10" height="10" viewBox="0 0 10 10" ><rect x=".5" y=".5" width="9" height="9" fill="#fff" stroke="#5a5a5a"/><path d="M.5 1.5h9" stroke="#5a5a5a" stroke-width="1.4"/></svg>
<div class="t" style="left:9px;top:34px;letter-spacing:0.189px">No operations to display at this time.</div>
</div>
<div style="left:1463px;top:75px;width:80px;height:720px;background:#fff;border-radius:7px 0 0 0;overflow:hidden">
<div style="left:0;top:0;width:80px;height:26px;background:linear-gradient(#d9dfee,#ebeef6 50%,#fff 92%)"></div>
<svg style="left:5px;top:8px" width="14" height="14" viewBox="0 0 14 14" ><rect x=".5" y=".5" width="5" height="5" fill="#dbe8fa" stroke="#2f62b8"/><rect x=".5" y="8.500" width="5" height="5" fill="#dbe8fa" stroke="#2f62b8"/><path d="M7.500 1.500h5.500M10.500 4.500h2.500M7.500 9.500h5.500M10.500 12.500h2.500" stroke="#2f62b8" stroke-width="1.200"/><rect x="7.500" y="3.500" width="2" height="2" fill="#fff" stroke="#2f62b8" stroke-width=".7"/><rect x="7.500" y="11.500" width="2" height="2" fill="#fff" stroke="#2f62b8" stroke-width=".7"/></svg>
<div class="t" style="left:24px;top:7px;letter-spacing:-0.098px">Outline</div>
<div class="t" style="left:26px;top:30px;font-size:12px;color:#1d3f8a;font-weight:bold;letter-spacing:-1.300px">?<span style="position:static;font-size:8px;vertical-align:1px">=</span>?</div>
<div class="t" style="left:46px;top:31px">xml</div>
<svg style="left:8px;top:55px" width="11" height="7" viewBox="0 0 11 7" ><path d="M1.4 1.3 5.6 5.3 9.8 1.3" fill="none" stroke="#3c3c3c" stroke-width="1.9"/></svg>
<svg style="left:27px;top:53px" width="12" height="12" viewBox="0 0 12 12" ><rect x=".5" y=".5" width="11" height="11" fill="#e9f1fb" stroke="#2a5aa8"/><text x="2.600" y="9.600" font-family="Liberation Sans, sans-serif" font-weight="bold" font-size="10.500" fill="#173f8c" stroke="#173f8c" stroke-width=".3">e</text></svg>
<div class="t" style="left:46px;top:51px">projectDescription</div>
<svg style="left:46px;top:73px" width="12" height="12" viewBox="0 0 12 12" ><rect x=".5" y=".5" width="11" height="11" fill="#e9f1fb" stroke="#2a5aa8"/><text x="2.600" y="9.600" font-family="Liberation Sans, sans-serif" font-weight="bold" font-size="10.500" fill="#173f8c" stroke="#173f8c" stroke-width=".3">e</text></svg>
<svg style="left:46px;top:93px" width="12" height="12" viewBox="0 0 12 12" ><rect x=".5" y=".5" width="11" height="11" fill="#e9f1fb" stroke="#2a5aa8"/><text x="2.600" y="9.600" font-family="Liberation Sans, sans-serif" font-weight="bold" font-size="10.500" fill="#173f8c" stroke="#173f8c" stroke-width=".3">e</text></svg>
<svg style="left:46px;top:113px" width="12" height="12" viewBox="0 0 12 12" ><rect x=".5" y=".5" width="11" height="11" fill="#e9f1fb" stroke="#2a5aa8"/><text x="2.600" y="9.600" font-family="Liberation Sans, sans-serif" font-weight="bold" font-size="10.500" fill="#173f8c" stroke="#173f8c" stroke-width=".3">e</text></svg>
<svg style="left:46px;top:133px" width="12" height="12" viewBox="0 0 12 12" ><rect x=".5" y=".5" width="11" height="11" fill="#e9f1fb" stroke="#2a5aa8"/><text x="2.600" y="9.600" font-family="Liberation Sans, sans-serif" font-weight="bold" font-size="10.500" fill="#173f8c" stroke="#173f8c" stroke-width=".3">e</text></svg>
<svg style="left:46px;top:153px" width="12" height="12" viewBox="0 0 12 12" ><rect x=".5" y=".5" width="11" height="11" fill="#e9f1fb" stroke="#2a5aa8"/><text x="2.600" y="9.600" font-family="Liberation Sans, sans-serif" font-weight="bold" font-size="10.500" fill="#173f8c" stroke="#173f8c" stroke-width=".3">e</text></svg>
<svg style="left:30px;top:133px" width="7" height="11" viewBox="0 0 7 11" ><path d="M1.3 1.6 5.4 5.8 1.3 10" fill="none" stroke="#a3a3a3" stroke-width="1.9"/></svg>
<svg style="left:28px;top:155px" width="11" height="7" viewBox="0 0 11 7" ><path d="M1.4 1.3 5.6 5.3 9.8 1.3" fill="none" stroke="#3c3c3c" stroke-width="1.9"/></svg>
</div>
<div class="t" style="left:1319px;top:760px;letter-spacing:-0.384px;font-size:18.5px;color:rgba(125,125,125,.66);line-height:24px;height:24px;text-shadow:1px 1px 0 rgba(255,255,255,.9),-1px -1px 0 rgba(255,255,255,.9)">CSDN @spencer_tseng</div>
</body></html>
